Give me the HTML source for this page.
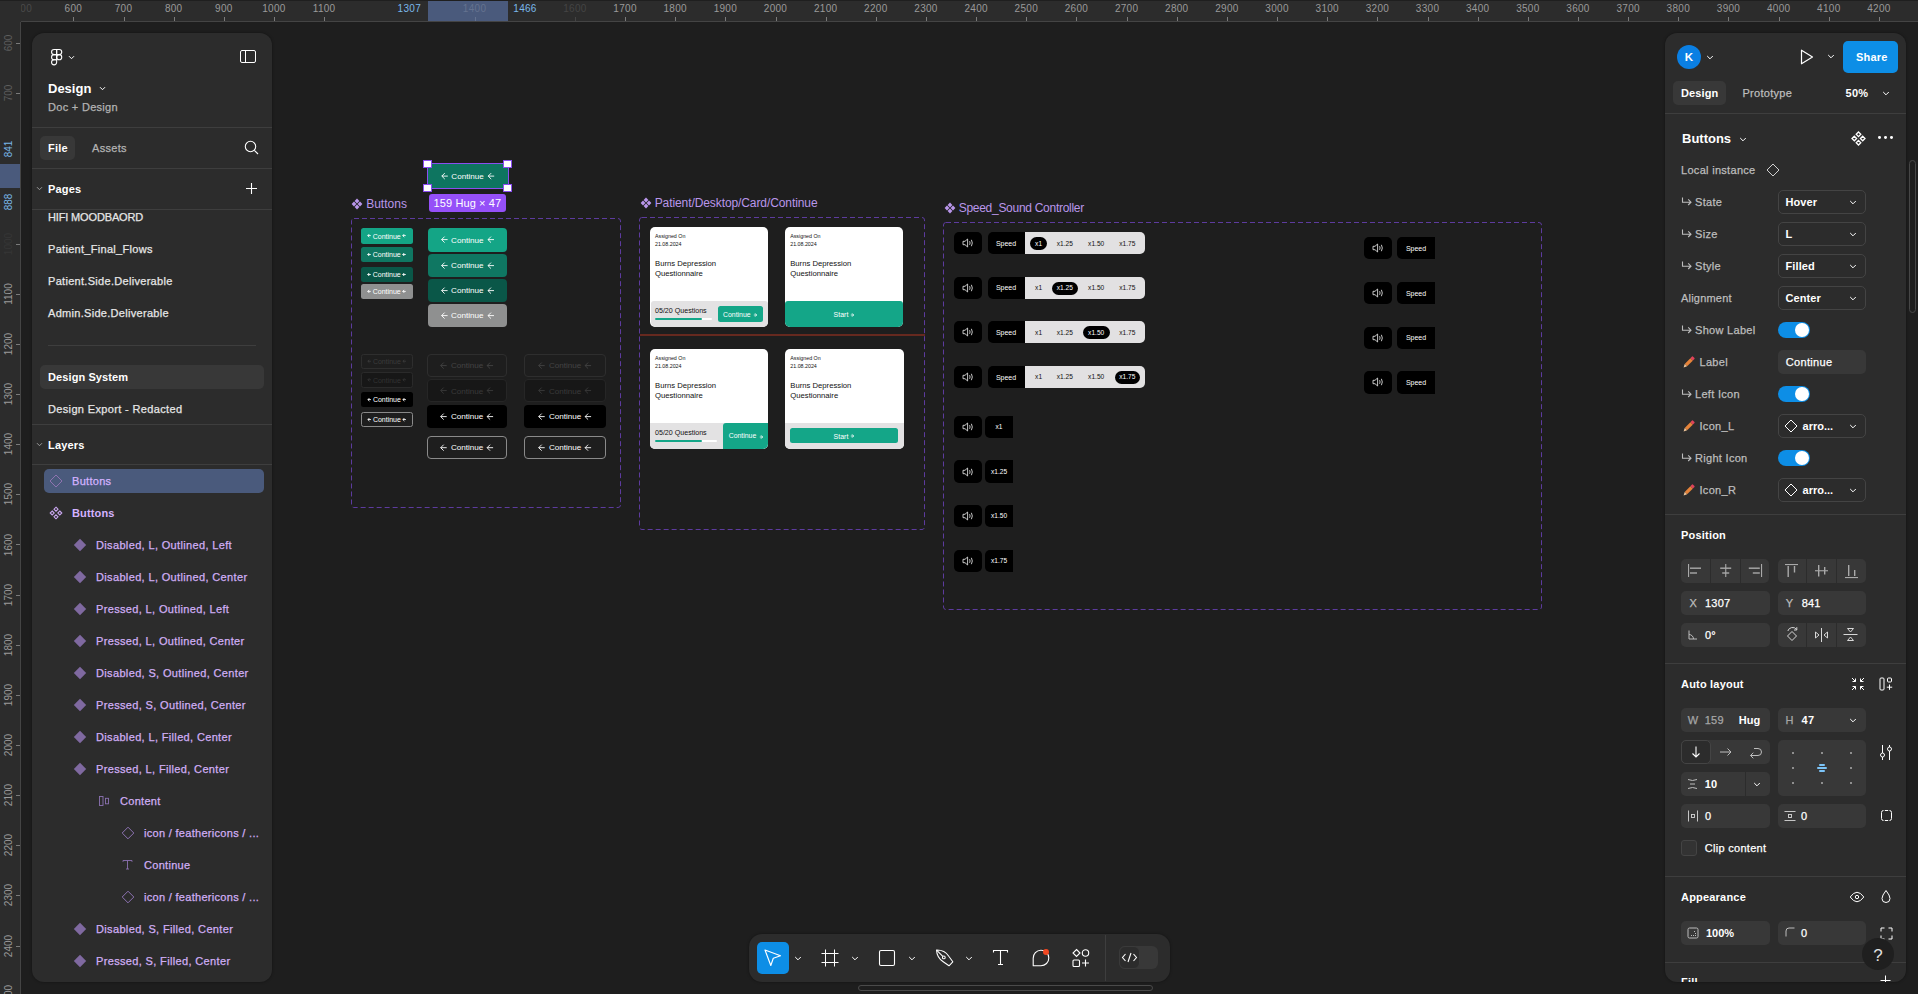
<!DOCTYPE html>
<html><head><meta charset="utf-8"><title>Figma</title>
<style>
html,body{margin:0;padding:0;}
body{width:1918px;height:994px;overflow:hidden;background:#1e1e1e;position:relative;font-family:"Liberation Sans", sans-serif;}
.t{position:absolute;white-space:nowrap;}
.r{position:absolute;box-sizing:border-box;}
</style></head><body>
<svg class="r" style="left:351px;top:197.5px;" width="12" height="12" viewBox="0 0 12 12" fill="none"><g fill="#b996ea"><path d="M6 0.6 L8.4 3 L6 5.4 L3.6 3 Z"/><path d="M6 6.6 L8.4 9 L6 11.4 L3.6 9 Z"/><path d="M3 3.6 L5.4 6 L3 8.4 L0.6 6 Z"/><path d="M9 3.6 L11.4 6 L9 8.4 L6.6 6 Z"/></g></svg>
<div class="t" style="left:366.20px;top:197.94px;font-size:12px;line-height:12px;color:#b996ea;font-weight:400;letter-spacing:0px;">Buttons</div>
<svg class="r" style="left:350px;top:217px;" width="272" height="292" viewBox="0 0 272 292" fill="none"><rect x="1.5" y="1.5" width="269" height="289" rx="2.5" stroke="#5d3b9e" stroke-width="1" stroke-dasharray="5 3"/></svg>
<div class="r" style="left:361px;top:228.4px;width:51.5px;height:15.2px;background:#14a586;border-radius:2.5px;"></div>
<div class="t" style="left:186.75px;width:400px;text-align:center;top:232.59px;font-size:7px;line-height:7px;color:#ffffff;font-weight:400;letter-spacing:0px;">Continue</div>
<svg class="r" style="left:361px;top:228.4px;" width="51.5" height="15.2" viewBox="0 0 51.5 15.2" fill="none"><path d="M9.74 7.60 H6.74 M8.24 6.10 L6.74 7.60 L8.24 9.10" stroke="#ffffff" stroke-width="0.9" fill="none"/><path d="M44.76 7.60 H41.76 M43.26 6.10 L41.76 7.60 L43.26 9.10" stroke="#ffffff" stroke-width="0.9" fill="none"/></svg>
<div class="r" style="left:361px;top:247px;width:51.5px;height:15px;background:#0f7762;border-radius:2.5px;"></div>
<div class="t" style="left:186.75px;width:400px;text-align:center;top:251.09px;font-size:7px;line-height:7px;color:#ffffff;font-weight:400;letter-spacing:0px;">Continue</div>
<svg class="r" style="left:361px;top:247px;" width="51.5" height="15" viewBox="0 0 51.5 15" fill="none"><path d="M9.74 7.50 H6.74 M8.24 6.00 L6.74 7.50 L8.24 9.00" stroke="#ffffff" stroke-width="0.9" fill="none"/><path d="M44.76 7.50 H41.76 M43.26 6.00 L41.76 7.50 L43.26 9.00" stroke="#ffffff" stroke-width="0.9" fill="none"/></svg>
<div class="r" style="left:361px;top:266.8px;width:51.5px;height:15px;background:#0a5748;border-radius:2.5px;"></div>
<div class="t" style="left:186.75px;width:400px;text-align:center;top:270.89px;font-size:7px;line-height:7px;color:#ffffff;font-weight:400;letter-spacing:0px;">Continue</div>
<svg class="r" style="left:361px;top:266.8px;" width="51.5" height="15" viewBox="0 0 51.5 15" fill="none"><path d="M9.74 7.50 H6.74 M8.24 6.00 L6.74 7.50 L8.24 9.00" stroke="#ffffff" stroke-width="0.9" fill="none"/><path d="M44.76 7.50 H41.76 M43.26 6.00 L41.76 7.50 L43.26 9.00" stroke="#ffffff" stroke-width="0.9" fill="none"/></svg>
<div class="r" style="left:361px;top:284.2px;width:51.5px;height:14.8px;background:#8f9090;border-radius:2.5px;"></div>
<div class="t" style="left:186.75px;width:400px;text-align:center;top:288.19px;font-size:7px;line-height:7px;color:#ffffff;font-weight:400;letter-spacing:0px;">Continue</div>
<svg class="r" style="left:361px;top:284.2px;" width="51.5" height="14.8" viewBox="0 0 51.5 14.8" fill="none"><path d="M9.74 7.40 H6.74 M8.24 5.90 L6.74 7.40 L8.24 8.90" stroke="#ffffff" stroke-width="0.9" fill="none"/><path d="M44.76 7.40 H41.76 M43.26 5.90 L41.76 7.40 L43.26 8.90" stroke="#ffffff" stroke-width="0.9" fill="none"/></svg>
<div class="r" style="left:427.5px;top:228.4px;width:79.6px;height:23.2px;background:#14a586;border-radius:4px;"></div>
<div class="t" style="left:267.30px;width:400px;text-align:center;top:236.66px;font-size:8.1px;line-height:8.1px;color:#ffffff;font-weight:400;letter-spacing:0px;">Continue</div>
<svg class="r" style="left:427.5px;top:228.4px;" width="79.6" height="23.2" viewBox="0 0 79.6 23.2" fill="none"><path d="M19.59 11.60 H13.59 M16.59 8.60 L13.59 11.60 L16.59 14.60" stroke="#ffffff" stroke-width="0.9" fill="none"/><path d="M66.01 11.60 H60.01 M63.01 8.60 L60.01 11.60 L63.01 14.60" stroke="#ffffff" stroke-width="0.9" fill="none"/></svg>
<div class="r" style="left:427.5px;top:254px;width:79.6px;height:23.2px;background:#0f7762;border-radius:4px;"></div>
<div class="t" style="left:267.30px;width:400px;text-align:center;top:262.26px;font-size:8.1px;line-height:8.1px;color:#ffffff;font-weight:400;letter-spacing:0px;">Continue</div>
<svg class="r" style="left:427.5px;top:254px;" width="79.6" height="23.2" viewBox="0 0 79.6 23.2" fill="none"><path d="M19.59 11.60 H13.59 M16.59 8.60 L13.59 11.60 L16.59 14.60" stroke="#ffffff" stroke-width="0.9" fill="none"/><path d="M66.01 11.60 H60.01 M63.01 8.60 L60.01 11.60 L63.01 14.60" stroke="#ffffff" stroke-width="0.9" fill="none"/></svg>
<div class="r" style="left:427.5px;top:279px;width:79.6px;height:23.2px;background:#0a5748;border-radius:4px;"></div>
<div class="t" style="left:267.30px;width:400px;text-align:center;top:287.26px;font-size:8.1px;line-height:8.1px;color:#ffffff;font-weight:400;letter-spacing:0px;">Continue</div>
<svg class="r" style="left:427.5px;top:279px;" width="79.6" height="23.2" viewBox="0 0 79.6 23.2" fill="none"><path d="M19.59 11.60 H13.59 M16.59 8.60 L13.59 11.60 L16.59 14.60" stroke="#ffffff" stroke-width="0.9" fill="none"/><path d="M66.01 11.60 H60.01 M63.01 8.60 L60.01 11.60 L63.01 14.60" stroke="#ffffff" stroke-width="0.9" fill="none"/></svg>
<div class="r" style="left:427.5px;top:304px;width:79.6px;height:23.2px;background:#8f9090;border-radius:4px;"></div>
<div class="t" style="left:267.30px;width:400px;text-align:center;top:312.26px;font-size:8.1px;line-height:8.1px;color:#ffffff;font-weight:400;letter-spacing:0px;">Continue</div>
<svg class="r" style="left:427.5px;top:304px;" width="79.6" height="23.2" viewBox="0 0 79.6 23.2" fill="none"><path d="M19.59 11.60 H13.59 M16.59 8.60 L13.59 11.60 L16.59 14.60" stroke="#ffffff" stroke-width="0.9" fill="none"/><path d="M66.01 11.60 H60.01 M63.01 8.60 L60.01 11.60 L63.01 14.60" stroke="#ffffff" stroke-width="0.9" fill="none"/></svg>
<div class="r" style="left:361px;top:354.2px;width:51.8px;height:14.5px;background:#1e1e1e;border-radius:2.5px;border:1px solid #2e2e2e;"></div>
<div class="t" style="left:186.90px;width:400px;text-align:center;top:358.04px;font-size:7px;line-height:7px;color:#3b3b3b;font-weight:400;letter-spacing:0px;">Continue</div>
<svg class="r" style="left:361px;top:354.2px;" width="51.8" height="14.5" viewBox="0 0 51.8 14.5" fill="none"><path d="M9.89 7.25 H6.89 M8.39 5.75 L6.89 7.25 L8.39 8.75" stroke="#3b3b3b" stroke-width="0.9" fill="none"/><path d="M44.91 7.25 H41.91 M43.41 5.75 L41.91 7.25 L43.41 8.75" stroke="#3b3b3b" stroke-width="0.9" fill="none"/></svg>
<div class="r" style="left:361px;top:372.3px;width:51.8px;height:15.5px;background:#171717;border-radius:2.5px;border:1px solid #2a2a2a;"></div>
<div class="t" style="left:186.90px;width:400px;text-align:center;top:376.64px;font-size:7px;line-height:7px;color:#333333;font-weight:400;letter-spacing:0px;">Continue</div>
<svg class="r" style="left:361px;top:372.3px;" width="51.8" height="15.5" viewBox="0 0 51.8 15.5" fill="none"><path d="M9.89 7.75 H6.89 M8.39 6.25 L6.89 7.75 L8.39 9.25" stroke="#333333" stroke-width="0.9" fill="none"/><path d="M44.91 7.75 H41.91 M43.41 6.25 L41.91 7.75 L43.41 9.25" stroke="#333333" stroke-width="0.9" fill="none"/></svg>
<div class="r" style="left:361px;top:391.8px;width:51.8px;height:15.2px;background:#000000;border-radius:2.5px;"></div>
<div class="t" style="left:186.90px;width:400px;text-align:center;top:395.99px;font-size:7px;line-height:7px;color:#ffffff;font-weight:400;letter-spacing:0px;">Continue</div>
<svg class="r" style="left:361px;top:391.8px;" width="51.8" height="15.2" viewBox="0 0 51.8 15.2" fill="none"><path d="M9.89 7.60 H6.89 M8.39 6.10 L6.89 7.60 L8.39 9.10" stroke="#ffffff" stroke-width="0.9" fill="none"/><path d="M44.91 7.60 H41.91 M43.41 6.10 L41.91 7.60 L43.41 9.10" stroke="#ffffff" stroke-width="0.9" fill="none"/></svg>
<div class="r" style="left:361px;top:411.6px;width:51.8px;height:15.1px;background:#1e1e1e;border-radius:2.5px;border:1px solid #8a8a8a;"></div>
<div class="t" style="left:186.90px;width:400px;text-align:center;top:415.74px;font-size:7px;line-height:7px;color:#ffffff;font-weight:400;letter-spacing:0px;">Continue</div>
<svg class="r" style="left:361px;top:411.6px;" width="51.8" height="15.1" viewBox="0 0 51.8 15.1" fill="none"><path d="M9.89 7.55 H6.89 M8.39 6.05 L6.89 7.55 L8.39 9.05" stroke="#ffffff" stroke-width="0.9" fill="none"/><path d="M44.91 7.55 H41.91 M43.41 6.05 L41.91 7.55 L43.41 9.05" stroke="#ffffff" stroke-width="0.9" fill="none"/></svg>
<div class="r" style="left:427.2px;top:354.2px;width:79.8px;height:23.2px;background:#1e1e1e;border-radius:4px;border:1px solid #2e2e2e;"></div>
<div class="t" style="left:267.10px;width:400px;text-align:center;top:362.46px;font-size:8.1px;line-height:8.1px;color:#444444;font-weight:400;letter-spacing:0px;">Continue</div>
<svg class="r" style="left:427.2px;top:354.2px;" width="79.8" height="23.2" viewBox="0 0 79.8 23.2" fill="none"><path d="M19.69 11.60 H13.69 M16.69 8.60 L13.69 11.60 L16.69 14.60" stroke="#444444" stroke-width="0.9" fill="none"/><path d="M66.11 11.60 H60.11 M63.11 8.60 L60.11 11.60 L63.11 14.60" stroke="#444444" stroke-width="0.9" fill="none"/></svg>
<div class="r" style="left:427.2px;top:379.4px;width:79.8px;height:23.1px;background:#171717;border-radius:4px;border:1px solid #262626;"></div>
<div class="t" style="left:267.10px;width:400px;text-align:center;top:387.61px;font-size:8.1px;line-height:8.1px;color:#3a3a3a;font-weight:400;letter-spacing:0px;">Continue</div>
<svg class="r" style="left:427.2px;top:379.4px;" width="79.8" height="23.1" viewBox="0 0 79.8 23.1" fill="none"><path d="M19.69 11.55 H13.69 M16.69 8.55 L13.69 11.55 L16.69 14.55" stroke="#3a3a3a" stroke-width="0.9" fill="none"/><path d="M66.11 11.55 H60.11 M63.11 8.55 L60.11 11.55 L63.11 14.55" stroke="#3a3a3a" stroke-width="0.9" fill="none"/></svg>
<div class="r" style="left:427.2px;top:404.5px;width:79.8px;height:23.2px;background:#000000;border-radius:4px;"></div>
<div class="t" style="left:267.10px;width:400px;text-align:center;top:412.76px;font-size:8.1px;line-height:8.1px;color:#ffffff;font-weight:400;letter-spacing:0px;">Continue</div>
<svg class="r" style="left:427.2px;top:404.5px;" width="79.8" height="23.2" viewBox="0 0 79.8 23.2" fill="none"><path d="M19.69 11.60 H13.69 M16.69 8.60 L13.69 11.60 L16.69 14.60" stroke="#ffffff" stroke-width="0.9" fill="none"/><path d="M66.11 11.60 H60.11 M63.11 8.60 L60.11 11.60 L63.11 14.60" stroke="#ffffff" stroke-width="0.9" fill="none"/></svg>
<div class="r" style="left:427.2px;top:436.1px;width:79.8px;height:23.4px;background:#1e1e1e;border-radius:4px;border:1px solid #8a8a8a;"></div>
<div class="t" style="left:267.10px;width:400px;text-align:center;top:444.46px;font-size:8.1px;line-height:8.1px;color:#ffffff;font-weight:400;letter-spacing:0px;">Continue</div>
<svg class="r" style="left:427.2px;top:436.1px;" width="79.8" height="23.4" viewBox="0 0 79.8 23.4" fill="none"><path d="M19.69 11.70 H13.69 M16.69 8.70 L13.69 11.70 L16.69 14.70" stroke="#ffffff" stroke-width="0.9" fill="none"/><path d="M66.11 11.70 H60.11 M63.11 8.70 L60.11 11.70 L63.11 14.70" stroke="#ffffff" stroke-width="0.9" fill="none"/></svg>
<div class="r" style="left:524.2px;top:354.2px;width:81.8px;height:23.2px;background:#1e1e1e;border-radius:4px;border:1px solid #2e2e2e;"></div>
<div class="t" style="left:365.10px;width:400px;text-align:center;top:362.46px;font-size:8.1px;line-height:8.1px;color:#444444;font-weight:400;letter-spacing:0px;">Continue</div>
<svg class="r" style="left:524.2px;top:354.2px;" width="81.8" height="23.2" viewBox="0 0 81.8 23.2" fill="none"><path d="M20.69 11.60 H14.69 M17.69 8.60 L14.69 11.60 L17.69 14.60" stroke="#444444" stroke-width="0.9" fill="none"/><path d="M67.11 11.60 H61.11 M64.11 8.60 L61.11 11.60 L64.11 14.60" stroke="#444444" stroke-width="0.9" fill="none"/></svg>
<div class="r" style="left:524.2px;top:379.4px;width:81.8px;height:23.1px;background:#171717;border-radius:4px;border:1px solid #262626;"></div>
<div class="t" style="left:365.10px;width:400px;text-align:center;top:387.61px;font-size:8.1px;line-height:8.1px;color:#3a3a3a;font-weight:400;letter-spacing:0px;">Continue</div>
<svg class="r" style="left:524.2px;top:379.4px;" width="81.8" height="23.1" viewBox="0 0 81.8 23.1" fill="none"><path d="M20.69 11.55 H14.69 M17.69 8.55 L14.69 11.55 L17.69 14.55" stroke="#3a3a3a" stroke-width="0.9" fill="none"/><path d="M67.11 11.55 H61.11 M64.11 8.55 L61.11 11.55 L64.11 14.55" stroke="#3a3a3a" stroke-width="0.9" fill="none"/></svg>
<div class="r" style="left:524.2px;top:404.5px;width:81.8px;height:23.2px;background:#000000;border-radius:4px;"></div>
<div class="t" style="left:365.10px;width:400px;text-align:center;top:412.76px;font-size:8.1px;line-height:8.1px;color:#ffffff;font-weight:400;letter-spacing:0px;">Continue</div>
<svg class="r" style="left:524.2px;top:404.5px;" width="81.8" height="23.2" viewBox="0 0 81.8 23.2" fill="none"><path d="M20.69 11.60 H14.69 M17.69 8.60 L14.69 11.60 L17.69 14.60" stroke="#ffffff" stroke-width="0.9" fill="none"/><path d="M67.11 11.60 H61.11 M64.11 8.60 L61.11 11.60 L64.11 14.60" stroke="#ffffff" stroke-width="0.9" fill="none"/></svg>
<div class="r" style="left:524.2px;top:436.1px;width:81.8px;height:23.4px;background:#1e1e1e;border-radius:4px;border:1px solid #8a8a8a;"></div>
<div class="t" style="left:365.10px;width:400px;text-align:center;top:444.46px;font-size:8.1px;line-height:8.1px;color:#ffffff;font-weight:400;letter-spacing:0px;">Continue</div>
<svg class="r" style="left:524.2px;top:436.1px;" width="81.8" height="23.4" viewBox="0 0 81.8 23.4" fill="none"><path d="M20.69 11.70 H14.69 M17.69 8.70 L14.69 11.70 L17.69 14.70" stroke="#ffffff" stroke-width="0.9" fill="none"/><path d="M67.11 11.70 H61.11 M64.11 8.70 L61.11 11.70 L64.11 14.70" stroke="#ffffff" stroke-width="0.9" fill="none"/></svg>
<div class="r" style="left:427.5px;top:163.9px;width:80px;height:24.2px;background:#0e7560;border-radius:0px;"></div>
<div class="t" style="left:267.50px;width:400px;text-align:center;top:172.66px;font-size:8.1px;line-height:8.1px;color:#ffffff;font-weight:400;letter-spacing:0px;">Continue</div>
<svg class="r" style="left:427.5px;top:163.9px;" width="80" height="24.2" viewBox="0 0 80 24.2" fill="none"><path d="M19.79 12.10 H13.79 M16.79 9.10 L13.79 12.10 L16.79 15.10" stroke="#ffffff" stroke-width="0.9" fill="none"/><path d="M66.21 12.10 H60.21 M63.21 9.10 L60.21 12.10 L63.21 15.10" stroke="#ffffff" stroke-width="0.9" fill="none"/></svg>
<div class="r" style="left:426.6px;top:163px;width:82px;height:26px;background:transparent;border:1.8px solid #8a4ef0;"></div>
<div class="r" style="left:423.3px;top:159.70000000000002px;width:8.4px;height:8.4px;background:#ffffff;border:1.4px solid #8a4ef0;"></div>
<div class="r" style="left:503.40000000000003px;top:159.70000000000002px;width:8.4px;height:8.4px;background:#ffffff;border:1.4px solid #8a4ef0;"></div>
<div class="r" style="left:423.3px;top:183.9px;width:8.4px;height:8.4px;background:#ffffff;border:1.4px solid #8a4ef0;"></div>
<div class="r" style="left:503.40000000000003px;top:183.9px;width:8.4px;height:8.4px;background:#ffffff;border:1.4px solid #8a4ef0;"></div>
<div class="r" style="left:429.4px;top:194.4px;width:76.3px;height:17.4px;background:#9550f8;border-radius:3px;"></div>
<div class="t" style="left:267.40px;width:400px;text-align:center;top:197.99px;font-size:11px;line-height:11px;color:#ffffff;font-weight:400;letter-spacing:0.1px;">159 Hug × 47</div>
<svg class="r" style="left:639.8px;top:196.5px;" width="12" height="12" viewBox="0 0 12 12" fill="none"><g fill="#b996ea"><path d="M6 0.6 L8.4 3 L6 5.4 L3.6 3 Z"/><path d="M6 6.6 L8.4 9 L6 11.4 L3.6 9 Z"/><path d="M3 3.6 L5.4 6 L3 8.4 L0.6 6 Z"/><path d="M9 3.6 L11.4 6 L9 8.4 L6.6 6 Z"/></g></svg>
<div class="t" style="left:654.70px;top:197.04px;font-size:12px;line-height:12px;color:#b996ea;font-weight:400;letter-spacing:-0.09px;">Patient/Desktop/Card/Continue</div>
<svg class="r" style="left:638px;top:216px;" width="288" height="315" viewBox="0 0 288 315" fill="none"><rect x="1.5" y="1.5" width="285" height="312" rx="2.5" stroke="#5d3b9e" stroke-width="1" stroke-dasharray="5 3"/></svg>
<div class="r" style="left:640px;top:334px;width:284.5px;height:1.5px;background:#66291f;"></div>
<div class="r" style="left:650px;top:227px;width:118px;height:100.2px;background:#ffffff;border-radius:5px;"></div>
<div class="t" style="left:655.00px;top:233.51px;font-size:5.3px;line-height:5.3px;color:#111;font-weight:400;letter-spacing:0px;">Assigned On</div>
<div class="t" style="left:655.00px;top:241.81px;font-size:5.3px;line-height:5.3px;color:#111;font-weight:400;letter-spacing:0px;">21.08.2024</div>
<div class="t" style="left:655.00px;top:259.78px;font-size:7.7px;line-height:7.7px;color:#111;font-weight:400;letter-spacing:0px;">Burns Depression</div>
<div class="t" style="left:655.00px;top:269.68px;font-size:7.7px;line-height:7.7px;color:#111;font-weight:400;letter-spacing:0px;">Questionnaire</div>
<div class="r" style="left:650.5px;top:300.8px;width:117px;height:26.3px;background:#e3e2e3;border-radius:3px 3px 5px 5px;"></div>
<div class="t" style="left:655.00px;top:308.19px;font-size:7.1px;line-height:7.1px;color:#111;font-weight:400;letter-spacing:0px;">05/20 Questions</div>
<div class="r" style="left:655px;top:318px;width:57px;height:2px;background:#ffffff;border-radius:1px;"></div>
<div class="r" style="left:655px;top:318px;width:47px;height:2px;background:#14a688;border-radius:1px;"></div>
<div class="r" style="left:718px;top:306.3px;width:45px;height:15.3px;background:#14a688;border-radius:2.5px;"></div>
<div class="t" style="left:536.80px;width:400px;text-align:center;top:311.56px;font-size:6.9px;line-height:6.9px;color:#fff;font-weight:400;letter-spacing:0px;">Continue</div>
<svg class="r" style="left:752.5px;top:310.8px;" width="6" height="8" viewBox="0 0 6 8" fill="none"><path d="M2 2.3 L3.7 4 L2 5.7 M0.8 4 H3.6" stroke="#fff" stroke-width="0.8" fill="none"/></svg>
<div class="r" style="left:785.2px;top:227px;width:118.2px;height:100.2px;background:#ffffff;border-radius:5px;"></div>
<div class="t" style="left:790.20px;top:233.51px;font-size:5.3px;line-height:5.3px;color:#111;font-weight:400;letter-spacing:0px;">Assigned On</div>
<div class="t" style="left:790.20px;top:241.81px;font-size:5.3px;line-height:5.3px;color:#111;font-weight:400;letter-spacing:0px;">21.08.2024</div>
<div class="t" style="left:790.20px;top:259.78px;font-size:7.7px;line-height:7.7px;color:#111;font-weight:400;letter-spacing:0px;">Burns Depression</div>
<div class="t" style="left:790.20px;top:269.68px;font-size:7.7px;line-height:7.7px;color:#111;font-weight:400;letter-spacing:0px;">Questionnaire</div>
<div class="r" style="left:785.2px;top:300.8px;width:118.2px;height:26.4px;background:#14a688;border-radius:3px 3px 5px 5px;"></div>
<div class="t" style="left:641.00px;width:400px;text-align:center;top:311.07px;font-size:7px;line-height:7px;color:#fff;font-weight:400;letter-spacing:0px;">Start</div>
<svg class="r" style="left:850px;top:310.5px;" width="6" height="8" viewBox="0 0 6 8" fill="none"><path d="M2 2.3 L3.7 4 L2 5.7 M0.8 4 H3.6" stroke="#fff" stroke-width="0.8" fill="none"/></svg>
<div class="r" style="left:650px;top:349px;width:118.4px;height:100px;background:#ffffff;border-radius:5px;"></div>
<div class="t" style="left:655.00px;top:355.51px;font-size:5.3px;line-height:5.3px;color:#111;font-weight:400;letter-spacing:0px;">Assigned On</div>
<div class="t" style="left:655.00px;top:363.81px;font-size:5.3px;line-height:5.3px;color:#111;font-weight:400;letter-spacing:0px;">21.08.2024</div>
<div class="t" style="left:655.00px;top:381.78px;font-size:7.7px;line-height:7.7px;color:#111;font-weight:400;letter-spacing:0px;">Burns Depression</div>
<div class="t" style="left:655.00px;top:391.68px;font-size:7.7px;line-height:7.7px;color:#111;font-weight:400;letter-spacing:0px;">Questionnaire</div>
<div class="r" style="left:650px;top:422.5px;width:118.4px;height:26.5px;background:#e3e2e3;border-radius:0 0 5px 5px;"></div>
<div class="r" style="left:723px;top:422.5px;width:45.4px;height:26.5px;background:#14a688;border-radius:3px 0 5px 0;"></div>
<div class="t" style="left:655.00px;top:430.19px;font-size:7.1px;line-height:7.1px;color:#111;font-weight:400;letter-spacing:0px;">05/20 Questions</div>
<div class="r" style="left:655px;top:440px;width:62px;height:2px;background:#ffffff;border-radius:1px;"></div>
<div class="r" style="left:655px;top:440px;width:47px;height:2px;background:#14a688;border-radius:1px;"></div>
<div class="t" style="left:542.50px;width:400px;text-align:center;top:432.96px;font-size:6.9px;line-height:6.9px;color:#fff;font-weight:400;letter-spacing:0px;">Continue</div>
<svg class="r" style="left:758.5px;top:432.5px;" width="6" height="8" viewBox="0 0 6 8" fill="none"><path d="M2 2.3 L3.7 4 L2 5.7 M0.8 4 H3.6" stroke="#fff" stroke-width="0.8" fill="none"/></svg>
<div class="r" style="left:785.3px;top:349px;width:118.3px;height:100px;background:#ffffff;border-radius:5px;"></div>
<div class="t" style="left:790.30px;top:355.51px;font-size:5.3px;line-height:5.3px;color:#111;font-weight:400;letter-spacing:0px;">Assigned On</div>
<div class="t" style="left:790.30px;top:363.81px;font-size:5.3px;line-height:5.3px;color:#111;font-weight:400;letter-spacing:0px;">21.08.2024</div>
<div class="t" style="left:790.30px;top:381.78px;font-size:7.7px;line-height:7.7px;color:#111;font-weight:400;letter-spacing:0px;">Burns Depression</div>
<div class="t" style="left:790.30px;top:391.68px;font-size:7.7px;line-height:7.7px;color:#111;font-weight:400;letter-spacing:0px;">Questionnaire</div>
<div class="r" style="left:785.3px;top:422.5px;width:118.3px;height:26.5px;background:#e3e2e3;border-radius:0 0 5px 5px;"></div>
<div class="r" style="left:790px;top:428.2px;width:108.3px;height:15.3px;background:#14a688;border-radius:2.5px;"></div>
<div class="t" style="left:641.00px;width:400px;text-align:center;top:432.57px;font-size:7px;line-height:7px;color:#fff;font-weight:400;letter-spacing:0px;">Start</div>
<svg class="r" style="left:850px;top:432px;" width="6" height="8" viewBox="0 0 6 8" fill="none"><path d="M2 2.3 L3.7 4 L2 5.7 M0.8 4 H3.6" stroke="#fff" stroke-width="0.8" fill="none"/></svg>
<svg class="r" style="left:943.8px;top:201.5px;" width="12" height="12" viewBox="0 0 12 12" fill="none"><g fill="#b996ea"><path d="M6 0.6 L8.4 3 L6 5.4 L3.6 3 Z"/><path d="M6 6.6 L8.4 9 L6 11.4 L3.6 9 Z"/><path d="M3 3.6 L5.4 6 L3 8.4 L0.6 6 Z"/><path d="M9 3.6 L11.4 6 L9 8.4 L6.6 6 Z"/></g></svg>
<div class="t" style="left:958.70px;top:201.94px;font-size:12px;line-height:12px;color:#b996ea;font-weight:400;letter-spacing:-0.28px;">Speed_Sound Controller</div>
<svg class="r" style="left:942px;top:221px;" width="601" height="390" viewBox="0 0 601 390" fill="none"><rect x="1.5" y="1.5" width="598" height="387" rx="2.5" stroke="#5d3b9e" stroke-width="1" stroke-dasharray="5 3"/></svg>
<div class="r" style="left:954px;top:232.2px;width:28px;height:22px;background:#000000;border-radius:5px;"></div>
<svg class="r" style="left:962.0px;top:238.2px;" width="12" height="10" viewBox="0 0 12 10" fill="none"><g stroke="#e6e6e6" stroke-width="0.85" fill="none" stroke-linejoin="round"><path d="M1 3.3 H3 L5.6 1 V9 L3 6.7 H1 Z"/><path d="M7.6 3.2 Q8.6 5 7.6 6.8"/><path d="M9.4 1.8 Q11.2 5 9.4 8.2"/></g></svg>
<div class="r" style="left:987.5px;top:232.2px;width:38px;height:22px;background:#000000;border-radius:5px 0 0 5px;"></div>
<div class="t" style="left:806.00px;width:400px;text-align:center;top:239.77px;font-size:7px;line-height:7px;color:#ffffff;font-weight:400;letter-spacing:0px;">Speed</div>
<div class="r" style="left:1025.1px;top:232.2px;width:120.4px;height:22px;background:#e2e1e2;border-radius:0 5px 5px 0;"></div>
<div class="r" style="left:1030.3px;top:236.89999999999998px;width:16.700000000000045px;height:13px;background:#000000;border-radius:7px;"></div>
<div class="t" style="left:838.60px;width:400px;text-align:center;top:240.51px;font-size:6.6px;line-height:6.6px;color:#ffffff;font-weight:400;letter-spacing:0px;">x1</div>
<div class="t" style="left:864.90px;width:400px;text-align:center;top:240.51px;font-size:6.6px;line-height:6.6px;color:#111111;font-weight:400;letter-spacing:0px;">x1.25</div>
<div class="t" style="left:896.20px;width:400px;text-align:center;top:240.51px;font-size:6.6px;line-height:6.6px;color:#111111;font-weight:400;letter-spacing:0px;">x1.50</div>
<div class="t" style="left:927.40px;width:400px;text-align:center;top:240.51px;font-size:6.6px;line-height:6.6px;color:#111111;font-weight:400;letter-spacing:0px;">x1.75</div>
<div class="r" style="left:954px;top:276.8px;width:28px;height:22px;background:#000000;border-radius:5px;"></div>
<svg class="r" style="left:962.0px;top:282.8px;" width="12" height="10" viewBox="0 0 12 10" fill="none"><g stroke="#e6e6e6" stroke-width="0.85" fill="none" stroke-linejoin="round"><path d="M1 3.3 H3 L5.6 1 V9 L3 6.7 H1 Z"/><path d="M7.6 3.2 Q8.6 5 7.6 6.8"/><path d="M9.4 1.8 Q11.2 5 9.4 8.2"/></g></svg>
<div class="r" style="left:987.5px;top:276.8px;width:38px;height:22px;background:#000000;border-radius:5px 0 0 5px;"></div>
<div class="t" style="left:806.00px;width:400px;text-align:center;top:284.37px;font-size:7px;line-height:7px;color:#ffffff;font-weight:400;letter-spacing:0px;">Speed</div>
<div class="r" style="left:1025.1px;top:276.8px;width:120.4px;height:22px;background:#e2e1e2;border-radius:0 5px 5px 0;"></div>
<div class="r" style="left:1052.1px;top:281.5px;width:25.800000000000182px;height:13px;background:#000000;border-radius:7px;"></div>
<div class="t" style="left:838.60px;width:400px;text-align:center;top:285.11px;font-size:6.6px;line-height:6.6px;color:#111111;font-weight:400;letter-spacing:0px;">x1</div>
<div class="t" style="left:864.90px;width:400px;text-align:center;top:285.11px;font-size:6.6px;line-height:6.6px;color:#ffffff;font-weight:400;letter-spacing:0px;">x1.25</div>
<div class="t" style="left:896.20px;width:400px;text-align:center;top:285.11px;font-size:6.6px;line-height:6.6px;color:#111111;font-weight:400;letter-spacing:0px;">x1.50</div>
<div class="t" style="left:927.40px;width:400px;text-align:center;top:285.11px;font-size:6.6px;line-height:6.6px;color:#111111;font-weight:400;letter-spacing:0px;">x1.75</div>
<div class="r" style="left:954px;top:321.4px;width:28px;height:22px;background:#000000;border-radius:5px;"></div>
<svg class="r" style="left:962.0px;top:327.4px;" width="12" height="10" viewBox="0 0 12 10" fill="none"><g stroke="#e6e6e6" stroke-width="0.85" fill="none" stroke-linejoin="round"><path d="M1 3.3 H3 L5.6 1 V9 L3 6.7 H1 Z"/><path d="M7.6 3.2 Q8.6 5 7.6 6.8"/><path d="M9.4 1.8 Q11.2 5 9.4 8.2"/></g></svg>
<div class="r" style="left:987.5px;top:321.4px;width:38px;height:22px;background:#000000;border-radius:5px 0 0 5px;"></div>
<div class="t" style="left:806.00px;width:400px;text-align:center;top:328.97px;font-size:7px;line-height:7px;color:#ffffff;font-weight:400;letter-spacing:0px;">Speed</div>
<div class="r" style="left:1025.1px;top:321.4px;width:120.4px;height:22px;background:#e2e1e2;border-radius:0 5px 5px 0;"></div>
<div class="r" style="left:1082.9px;top:326.09999999999997px;width:26.699999999999818px;height:13px;background:#000000;border-radius:7px;"></div>
<div class="t" style="left:838.60px;width:400px;text-align:center;top:329.71px;font-size:6.6px;line-height:6.6px;color:#111111;font-weight:400;letter-spacing:0px;">x1</div>
<div class="t" style="left:864.90px;width:400px;text-align:center;top:329.71px;font-size:6.6px;line-height:6.6px;color:#111111;font-weight:400;letter-spacing:0px;">x1.25</div>
<div class="t" style="left:896.20px;width:400px;text-align:center;top:329.71px;font-size:6.6px;line-height:6.6px;color:#ffffff;font-weight:400;letter-spacing:0px;">x1.50</div>
<div class="t" style="left:927.40px;width:400px;text-align:center;top:329.71px;font-size:6.6px;line-height:6.6px;color:#111111;font-weight:400;letter-spacing:0px;">x1.75</div>
<div class="r" style="left:954px;top:366.0px;width:28px;height:22px;background:#000000;border-radius:5px;"></div>
<svg class="r" style="left:962.0px;top:372.0px;" width="12" height="10" viewBox="0 0 12 10" fill="none"><g stroke="#e6e6e6" stroke-width="0.85" fill="none" stroke-linejoin="round"><path d="M1 3.3 H3 L5.6 1 V9 L3 6.7 H1 Z"/><path d="M7.6 3.2 Q8.6 5 7.6 6.8"/><path d="M9.4 1.8 Q11.2 5 9.4 8.2"/></g></svg>
<div class="r" style="left:987.5px;top:366.0px;width:38px;height:22px;background:#000000;border-radius:5px 0 0 5px;"></div>
<div class="t" style="left:806.00px;width:400px;text-align:center;top:373.57px;font-size:7px;line-height:7px;color:#ffffff;font-weight:400;letter-spacing:0px;">Speed</div>
<div class="r" style="left:1025.1px;top:366.0px;width:120.4px;height:22px;background:#e2e1e2;border-radius:0 5px 5px 0;"></div>
<div class="r" style="left:1114.7px;top:370.7px;width:25.09999999999991px;height:13px;background:#000000;border-radius:7px;"></div>
<div class="t" style="left:838.60px;width:400px;text-align:center;top:374.31px;font-size:6.6px;line-height:6.6px;color:#111111;font-weight:400;letter-spacing:0px;">x1</div>
<div class="t" style="left:864.90px;width:400px;text-align:center;top:374.31px;font-size:6.6px;line-height:6.6px;color:#111111;font-weight:400;letter-spacing:0px;">x1.25</div>
<div class="t" style="left:896.20px;width:400px;text-align:center;top:374.31px;font-size:6.6px;line-height:6.6px;color:#111111;font-weight:400;letter-spacing:0px;">x1.50</div>
<div class="t" style="left:927.40px;width:400px;text-align:center;top:374.31px;font-size:6.6px;line-height:6.6px;color:#ffffff;font-weight:400;letter-spacing:0px;">x1.75</div>
<div class="r" style="left:953.8px;top:415.8px;width:28.3px;height:22.2px;background:#000000;border-radius:5px;"></div>
<svg class="r" style="left:961.9499999999999px;top:421.90000000000003px;" width="12" height="10" viewBox="0 0 12 10" fill="none"><g stroke="#e6e6e6" stroke-width="0.85" fill="none" stroke-linejoin="round"><path d="M1 3.3 H3 L5.6 1 V9 L3 6.7 H1 Z"/><path d="M7.6 3.2 Q8.6 5 7.6 6.8"/><path d="M9.4 1.8 Q11.2 5 9.4 8.2"/></g></svg>
<div class="r" style="left:984.8px;top:415.8px;width:28.3px;height:22.2px;background:#000000;border-radius:5px 0 0 5px;"></div>
<div class="t" style="left:799.00px;width:400px;text-align:center;top:424.11px;font-size:6.6px;line-height:6.6px;color:#ffffff;font-weight:400;letter-spacing:0px;">x1</div>
<div class="r" style="left:953.8px;top:460.40000000000003px;width:28.3px;height:22.2px;background:#000000;border-radius:5px;"></div>
<svg class="r" style="left:961.9499999999999px;top:466.50000000000006px;" width="12" height="10" viewBox="0 0 12 10" fill="none"><g stroke="#e6e6e6" stroke-width="0.85" fill="none" stroke-linejoin="round"><path d="M1 3.3 H3 L5.6 1 V9 L3 6.7 H1 Z"/><path d="M7.6 3.2 Q8.6 5 7.6 6.8"/><path d="M9.4 1.8 Q11.2 5 9.4 8.2"/></g></svg>
<div class="r" style="left:984.8px;top:460.40000000000003px;width:28.3px;height:22.2px;background:#000000;border-radius:5px 0 0 5px;"></div>
<div class="t" style="left:799.00px;width:400px;text-align:center;top:468.71px;font-size:6.6px;line-height:6.6px;color:#ffffff;font-weight:400;letter-spacing:0px;">x1.25</div>
<div class="r" style="left:953.8px;top:505.0px;width:28.3px;height:22.2px;background:#000000;border-radius:5px;"></div>
<svg class="r" style="left:961.9499999999999px;top:511.1px;" width="12" height="10" viewBox="0 0 12 10" fill="none"><g stroke="#e6e6e6" stroke-width="0.85" fill="none" stroke-linejoin="round"><path d="M1 3.3 H3 L5.6 1 V9 L3 6.7 H1 Z"/><path d="M7.6 3.2 Q8.6 5 7.6 6.8"/><path d="M9.4 1.8 Q11.2 5 9.4 8.2"/></g></svg>
<div class="r" style="left:984.8px;top:505.0px;width:28.3px;height:22.2px;background:#000000;border-radius:5px 0 0 5px;"></div>
<div class="t" style="left:799.00px;width:400px;text-align:center;top:513.31px;font-size:6.6px;line-height:6.6px;color:#ffffff;font-weight:400;letter-spacing:0px;">x1.50</div>
<div class="r" style="left:953.8px;top:549.6px;width:28.3px;height:22.2px;background:#000000;border-radius:5px;"></div>
<svg class="r" style="left:961.9499999999999px;top:555.7px;" width="12" height="10" viewBox="0 0 12 10" fill="none"><g stroke="#e6e6e6" stroke-width="0.85" fill="none" stroke-linejoin="round"><path d="M1 3.3 H3 L5.6 1 V9 L3 6.7 H1 Z"/><path d="M7.6 3.2 Q8.6 5 7.6 6.8"/><path d="M9.4 1.8 Q11.2 5 9.4 8.2"/></g></svg>
<div class="r" style="left:984.8px;top:549.6px;width:28.3px;height:22.2px;background:#000000;border-radius:5px 0 0 5px;"></div>
<div class="t" style="left:799.00px;width:400px;text-align:center;top:557.91px;font-size:6.6px;line-height:6.6px;color:#ffffff;font-weight:400;letter-spacing:0px;">x1.75</div>
<div class="r" style="left:1363.9px;top:237.2px;width:28.5px;height:22.3px;background:#000000;border-radius:5px;"></div>
<svg class="r" style="left:1372.15px;top:243.35px;" width="12" height="10" viewBox="0 0 12 10" fill="none"><g stroke="#e6e6e6" stroke-width="0.85" fill="none" stroke-linejoin="round"><path d="M1 3.3 H3 L5.6 1 V9 L3 6.7 H1 Z"/><path d="M7.6 3.2 Q8.6 5 7.6 6.8"/><path d="M9.4 1.8 Q11.2 5 9.4 8.2"/></g></svg>
<div class="r" style="left:1397.4px;top:237.2px;width:37.5px;height:22.3px;background:#000000;border-radius:5px 0 0 5px;"></div>
<div class="t" style="left:1216.00px;width:400px;text-align:center;top:244.87px;font-size:7px;line-height:7px;color:#ffffff;font-weight:400;letter-spacing:0px;">Speed</div>
<div class="r" style="left:1363.9px;top:281.9px;width:28.5px;height:22.3px;background:#000000;border-radius:5px;"></div>
<svg class="r" style="left:1372.15px;top:288.04999999999995px;" width="12" height="10" viewBox="0 0 12 10" fill="none"><g stroke="#e6e6e6" stroke-width="0.85" fill="none" stroke-linejoin="round"><path d="M1 3.3 H3 L5.6 1 V9 L3 6.7 H1 Z"/><path d="M7.6 3.2 Q8.6 5 7.6 6.8"/><path d="M9.4 1.8 Q11.2 5 9.4 8.2"/></g></svg>
<div class="r" style="left:1397.4px;top:281.9px;width:37.5px;height:22.3px;background:#000000;border-radius:5px 0 0 5px;"></div>
<div class="t" style="left:1216.00px;width:400px;text-align:center;top:289.57px;font-size:7px;line-height:7px;color:#ffffff;font-weight:400;letter-spacing:0px;">Speed</div>
<div class="r" style="left:1363.9px;top:326.6px;width:28.5px;height:22.3px;background:#000000;border-radius:5px;"></div>
<svg class="r" style="left:1372.15px;top:332.75px;" width="12" height="10" viewBox="0 0 12 10" fill="none"><g stroke="#e6e6e6" stroke-width="0.85" fill="none" stroke-linejoin="round"><path d="M1 3.3 H3 L5.6 1 V9 L3 6.7 H1 Z"/><path d="M7.6 3.2 Q8.6 5 7.6 6.8"/><path d="M9.4 1.8 Q11.2 5 9.4 8.2"/></g></svg>
<div class="r" style="left:1397.4px;top:326.6px;width:37.5px;height:22.3px;background:#000000;border-radius:5px 0 0 5px;"></div>
<div class="t" style="left:1216.00px;width:400px;text-align:center;top:334.27px;font-size:7px;line-height:7px;color:#ffffff;font-weight:400;letter-spacing:0px;">Speed</div>
<div class="r" style="left:1363.9px;top:371.3px;width:28.5px;height:22.3px;background:#000000;border-radius:5px;"></div>
<svg class="r" style="left:1372.15px;top:377.45px;" width="12" height="10" viewBox="0 0 12 10" fill="none"><g stroke="#e6e6e6" stroke-width="0.85" fill="none" stroke-linejoin="round"><path d="M1 3.3 H3 L5.6 1 V9 L3 6.7 H1 Z"/><path d="M7.6 3.2 Q8.6 5 7.6 6.8"/><path d="M9.4 1.8 Q11.2 5 9.4 8.2"/></g></svg>
<div class="r" style="left:1397.4px;top:371.3px;width:37.5px;height:22.3px;background:#000000;border-radius:5px 0 0 5px;"></div>
<div class="t" style="left:1216.00px;width:400px;text-align:center;top:378.97px;font-size:7px;line-height:7px;color:#ffffff;font-weight:400;letter-spacing:0px;">Speed</div>
<div class="r" style="left:0px;top:0px;width:1918px;height:21px;background:#2c2c2c;"></div>
<div class="r" style="left:0px;top:21px;width:1918px;height:1px;background:#444444;"></div>
<div class="r" style="left:0px;top:0px;width:20px;height:994px;background:#2c2c2c;"></div>
<div class="r" style="left:20px;top:0px;width:1px;height:994px;background:#444444;"></div>
<div class="r" style="left:428px;top:0px;width:80px;height:21px;background:#4a5a7c;"></div>
<div class="r" style="left:0px;top:164px;width:20px;height:24px;background:#4a5a7c;"></div>
<div class="t" style="left:-176.81px;width:400px;text-align:center;top:3.54px;font-size:10px;line-height:10px;color:#4a4a4a;font-weight:400;letter-spacing:0.3px;">500</div>
<div class="t" style="left:-126.65px;width:400px;text-align:center;top:3.54px;font-size:10px;line-height:10px;color:#9a9a9a;font-weight:400;letter-spacing:0.3px;">600</div>
<div class="r" style="left:73px;top:17px;width:1px;height:4px;background:#7a7a7a;"></div>
<div class="t" style="left:-76.49px;width:400px;text-align:center;top:3.54px;font-size:10px;line-height:10px;color:#9a9a9a;font-weight:400;letter-spacing:0.3px;">700</div>
<div class="r" style="left:124px;top:17px;width:1px;height:4px;background:#7a7a7a;"></div>
<div class="t" style="left:-26.34px;width:400px;text-align:center;top:3.54px;font-size:10px;line-height:10px;color:#9a9a9a;font-weight:400;letter-spacing:0.3px;">800</div>
<div class="r" style="left:174px;top:17px;width:1px;height:4px;background:#7a7a7a;"></div>
<div class="t" style="left:23.82px;width:400px;text-align:center;top:3.54px;font-size:10px;line-height:10px;color:#9a9a9a;font-weight:400;letter-spacing:0.3px;">900</div>
<div class="r" style="left:224px;top:17px;width:1px;height:4px;background:#7a7a7a;"></div>
<div class="t" style="left:73.97px;width:400px;text-align:center;top:3.54px;font-size:10px;line-height:10px;color:#9a9a9a;font-weight:400;letter-spacing:0.3px;">1000</div>
<div class="r" style="left:274px;top:17px;width:1px;height:4px;background:#7a7a7a;"></div>
<div class="t" style="left:124.13px;width:400px;text-align:center;top:3.54px;font-size:10px;line-height:10px;color:#9a9a9a;font-weight:400;letter-spacing:0.3px;">1100</div>
<div class="r" style="left:324px;top:17px;width:1px;height:4px;background:#7a7a7a;"></div>
<div class="t" style="left:274.60px;width:400px;text-align:center;top:3.54px;font-size:10px;line-height:10px;color:#64728f;font-weight:400;letter-spacing:0.3px;">1400</div>
<div class="r" style="left:475px;top:17px;width:1px;height:4px;background:#64728f;"></div>
<div class="t" style="left:374.91px;width:400px;text-align:center;top:3.54px;font-size:10px;line-height:10px;color:#444444;font-weight:400;letter-spacing:0.3px;">1600</div>
<div class="r" style="left:575px;top:17px;width:1px;height:4px;background:#444444;"></div>
<div class="t" style="left:425.07px;width:400px;text-align:center;top:3.54px;font-size:10px;line-height:10px;color:#9a9a9a;font-weight:400;letter-spacing:0.3px;">1700</div>
<div class="r" style="left:625px;top:17px;width:1px;height:4px;background:#7a7a7a;"></div>
<div class="t" style="left:475.22px;width:400px;text-align:center;top:3.54px;font-size:10px;line-height:10px;color:#9a9a9a;font-weight:400;letter-spacing:0.3px;">1800</div>
<div class="r" style="left:675px;top:17px;width:1px;height:4px;background:#7a7a7a;"></div>
<div class="t" style="left:525.38px;width:400px;text-align:center;top:3.54px;font-size:10px;line-height:10px;color:#9a9a9a;font-weight:400;letter-spacing:0.3px;">1900</div>
<div class="r" style="left:725px;top:17px;width:1px;height:4px;background:#7a7a7a;"></div>
<div class="t" style="left:575.53px;width:400px;text-align:center;top:3.54px;font-size:10px;line-height:10px;color:#9a9a9a;font-weight:400;letter-spacing:0.3px;">2000</div>
<div class="r" style="left:776px;top:17px;width:1px;height:4px;background:#7a7a7a;"></div>
<div class="t" style="left:625.69px;width:400px;text-align:center;top:3.54px;font-size:10px;line-height:10px;color:#9a9a9a;font-weight:400;letter-spacing:0.3px;">2100</div>
<div class="r" style="left:826px;top:17px;width:1px;height:4px;background:#7a7a7a;"></div>
<div class="t" style="left:675.85px;width:400px;text-align:center;top:3.54px;font-size:10px;line-height:10px;color:#9a9a9a;font-weight:400;letter-spacing:0.3px;">2200</div>
<div class="r" style="left:876px;top:17px;width:1px;height:4px;background:#7a7a7a;"></div>
<div class="t" style="left:726.00px;width:400px;text-align:center;top:3.54px;font-size:10px;line-height:10px;color:#9a9a9a;font-weight:400;letter-spacing:0.3px;">2300</div>
<div class="r" style="left:926px;top:17px;width:1px;height:4px;background:#7a7a7a;"></div>
<div class="t" style="left:776.16px;width:400px;text-align:center;top:3.54px;font-size:10px;line-height:10px;color:#9a9a9a;font-weight:400;letter-spacing:0.3px;">2400</div>
<div class="r" style="left:976px;top:17px;width:1px;height:4px;background:#7a7a7a;"></div>
<div class="t" style="left:826.31px;width:400px;text-align:center;top:3.54px;font-size:10px;line-height:10px;color:#9a9a9a;font-weight:400;letter-spacing:0.3px;">2500</div>
<div class="r" style="left:1026px;top:17px;width:1px;height:4px;background:#7a7a7a;"></div>
<div class="t" style="left:876.47px;width:400px;text-align:center;top:3.54px;font-size:10px;line-height:10px;color:#9a9a9a;font-weight:400;letter-spacing:0.3px;">2600</div>
<div class="r" style="left:1076px;top:17px;width:1px;height:4px;background:#7a7a7a;"></div>
<div class="t" style="left:926.63px;width:400px;text-align:center;top:3.54px;font-size:10px;line-height:10px;color:#9a9a9a;font-weight:400;letter-spacing:0.3px;">2700</div>
<div class="r" style="left:1127px;top:17px;width:1px;height:4px;background:#7a7a7a;"></div>
<div class="t" style="left:976.78px;width:400px;text-align:center;top:3.54px;font-size:10px;line-height:10px;color:#9a9a9a;font-weight:400;letter-spacing:0.3px;">2800</div>
<div class="r" style="left:1177px;top:17px;width:1px;height:4px;background:#7a7a7a;"></div>
<div class="t" style="left:1026.94px;width:400px;text-align:center;top:3.54px;font-size:10px;line-height:10px;color:#9a9a9a;font-weight:400;letter-spacing:0.3px;">2900</div>
<div class="r" style="left:1227px;top:17px;width:1px;height:4px;background:#7a7a7a;"></div>
<div class="t" style="left:1077.09px;width:400px;text-align:center;top:3.54px;font-size:10px;line-height:10px;color:#9a9a9a;font-weight:400;letter-spacing:0.3px;">3000</div>
<div class="r" style="left:1277px;top:17px;width:1px;height:4px;background:#7a7a7a;"></div>
<div class="t" style="left:1127.25px;width:400px;text-align:center;top:3.54px;font-size:10px;line-height:10px;color:#9a9a9a;font-weight:400;letter-spacing:0.3px;">3100</div>
<div class="r" style="left:1327px;top:17px;width:1px;height:4px;background:#7a7a7a;"></div>
<div class="t" style="left:1177.41px;width:400px;text-align:center;top:3.54px;font-size:10px;line-height:10px;color:#9a9a9a;font-weight:400;letter-spacing:0.3px;">3200</div>
<div class="r" style="left:1377px;top:17px;width:1px;height:4px;background:#7a7a7a;"></div>
<div class="t" style="left:1227.56px;width:400px;text-align:center;top:3.54px;font-size:10px;line-height:10px;color:#9a9a9a;font-weight:400;letter-spacing:0.3px;">3300</div>
<div class="r" style="left:1428px;top:17px;width:1px;height:4px;background:#7a7a7a;"></div>
<div class="t" style="left:1277.72px;width:400px;text-align:center;top:3.54px;font-size:10px;line-height:10px;color:#9a9a9a;font-weight:400;letter-spacing:0.3px;">3400</div>
<div class="r" style="left:1478px;top:17px;width:1px;height:4px;background:#7a7a7a;"></div>
<div class="t" style="left:1327.87px;width:400px;text-align:center;top:3.54px;font-size:10px;line-height:10px;color:#9a9a9a;font-weight:400;letter-spacing:0.3px;">3500</div>
<div class="r" style="left:1528px;top:17px;width:1px;height:4px;background:#7a7a7a;"></div>
<div class="t" style="left:1378.03px;width:400px;text-align:center;top:3.54px;font-size:10px;line-height:10px;color:#9a9a9a;font-weight:400;letter-spacing:0.3px;">3600</div>
<div class="r" style="left:1578px;top:17px;width:1px;height:4px;background:#7a7a7a;"></div>
<div class="t" style="left:1428.19px;width:400px;text-align:center;top:3.54px;font-size:10px;line-height:10px;color:#9a9a9a;font-weight:400;letter-spacing:0.3px;">3700</div>
<div class="r" style="left:1628px;top:17px;width:1px;height:4px;background:#7a7a7a;"></div>
<div class="t" style="left:1478.34px;width:400px;text-align:center;top:3.54px;font-size:10px;line-height:10px;color:#9a9a9a;font-weight:400;letter-spacing:0.3px;">3800</div>
<div class="r" style="left:1678px;top:17px;width:1px;height:4px;background:#7a7a7a;"></div>
<div class="t" style="left:1528.50px;width:400px;text-align:center;top:3.54px;font-size:10px;line-height:10px;color:#9a9a9a;font-weight:400;letter-spacing:0.3px;">3900</div>
<div class="r" style="left:1728px;top:17px;width:1px;height:4px;background:#7a7a7a;"></div>
<div class="t" style="left:1578.65px;width:400px;text-align:center;top:3.54px;font-size:10px;line-height:10px;color:#9a9a9a;font-weight:400;letter-spacing:0.3px;">4000</div>
<div class="r" style="left:1779px;top:17px;width:1px;height:4px;background:#7a7a7a;"></div>
<div class="t" style="left:1628.81px;width:400px;text-align:center;top:3.54px;font-size:10px;line-height:10px;color:#9a9a9a;font-weight:400;letter-spacing:0.3px;">4100</div>
<div class="r" style="left:1829px;top:17px;width:1px;height:4px;background:#7a7a7a;"></div>
<div class="t" style="left:1678.97px;width:400px;text-align:center;top:3.54px;font-size:10px;line-height:10px;color:#9a9a9a;font-weight:400;letter-spacing:0.3px;">4200</div>
<div class="r" style="left:1879px;top:17px;width:1px;height:4px;background:#7a7a7a;"></div>
<div class="t" style="left:21.00px;width:400px;text-align:right;top:3.54px;font-size:10px;line-height:10px;color:#7ab8ea;font-weight:400;letter-spacing:0.3px;">1307</div>
<div class="t" style="left:325.00px;width:400px;text-align:center;top:3.54px;font-size:10px;line-height:10px;color:#7ab8ea;font-weight:400;letter-spacing:0.3px;">1466</div>
<div class="t" style="left:-91.3px;top:38.25px;width:200px;height:10px;text-align:center;font-size:10px;line-height:10px;color:#5e5e5e;transform:rotate(-90deg);transform-origin:100px 5px;">600</div>
<div class="r" style="left:16px;top:43px;width:4px;height:1px;background:#7a7a7a;"></div>
<div class="t" style="left:-91.3px;top:88.38px;width:200px;height:10px;text-align:center;font-size:10px;line-height:10px;color:#5e5e5e;transform:rotate(-90deg);transform-origin:100px 5px;">700</div>
<div class="r" style="left:16px;top:93px;width:4px;height:1px;background:#7a7a7a;"></div>
<div class="t" style="left:-91.3px;top:238.75px;width:200px;height:10px;text-align:center;font-size:10px;line-height:10px;color:#363636;transform:rotate(-90deg);transform-origin:100px 5px;">1000</div>
<div class="r" style="left:16px;top:244px;width:4px;height:1px;background:#7a7a7a;"></div>
<div class="t" style="left:-91.3px;top:288.88px;width:200px;height:10px;text-align:center;font-size:10px;line-height:10px;color:#9a9a9a;transform:rotate(-90deg);transform-origin:100px 5px;">1100</div>
<div class="r" style="left:16px;top:294px;width:4px;height:1px;background:#7a7a7a;"></div>
<div class="t" style="left:-91.3px;top:339.00px;width:200px;height:10px;text-align:center;font-size:10px;line-height:10px;color:#9a9a9a;transform:rotate(-90deg);transform-origin:100px 5px;">1200</div>
<div class="r" style="left:16px;top:344px;width:4px;height:1px;background:#7a7a7a;"></div>
<div class="t" style="left:-91.3px;top:389.12px;width:200px;height:10px;text-align:center;font-size:10px;line-height:10px;color:#9a9a9a;transform:rotate(-90deg);transform-origin:100px 5px;">1300</div>
<div class="r" style="left:16px;top:394px;width:4px;height:1px;background:#7a7a7a;"></div>
<div class="t" style="left:-91.3px;top:439.25px;width:200px;height:10px;text-align:center;font-size:10px;line-height:10px;color:#9a9a9a;transform:rotate(-90deg);transform-origin:100px 5px;">1400</div>
<div class="r" style="left:16px;top:444px;width:4px;height:1px;background:#7a7a7a;"></div>
<div class="t" style="left:-91.3px;top:489.38px;width:200px;height:10px;text-align:center;font-size:10px;line-height:10px;color:#9a9a9a;transform:rotate(-90deg);transform-origin:100px 5px;">1500</div>
<div class="r" style="left:16px;top:494px;width:4px;height:1px;background:#7a7a7a;"></div>
<div class="t" style="left:-91.3px;top:539.50px;width:200px;height:10px;text-align:center;font-size:10px;line-height:10px;color:#9a9a9a;transform:rotate(-90deg);transform-origin:100px 5px;">1600</div>
<div class="r" style="left:16px;top:544px;width:4px;height:1px;background:#7a7a7a;"></div>
<div class="t" style="left:-91.3px;top:589.62px;width:200px;height:10px;text-align:center;font-size:10px;line-height:10px;color:#9a9a9a;transform:rotate(-90deg);transform-origin:100px 5px;">1700</div>
<div class="r" style="left:16px;top:595px;width:4px;height:1px;background:#7a7a7a;"></div>
<div class="t" style="left:-91.3px;top:639.75px;width:200px;height:10px;text-align:center;font-size:10px;line-height:10px;color:#9a9a9a;transform:rotate(-90deg);transform-origin:100px 5px;">1800</div>
<div class="r" style="left:16px;top:645px;width:4px;height:1px;background:#7a7a7a;"></div>
<div class="t" style="left:-91.3px;top:689.88px;width:200px;height:10px;text-align:center;font-size:10px;line-height:10px;color:#9a9a9a;transform:rotate(-90deg);transform-origin:100px 5px;">1900</div>
<div class="r" style="left:16px;top:695px;width:4px;height:1px;background:#7a7a7a;"></div>
<div class="t" style="left:-91.3px;top:740.00px;width:200px;height:10px;text-align:center;font-size:10px;line-height:10px;color:#9a9a9a;transform:rotate(-90deg);transform-origin:100px 5px;">2000</div>
<div class="r" style="left:16px;top:745px;width:4px;height:1px;background:#7a7a7a;"></div>
<div class="t" style="left:-91.3px;top:790.12px;width:200px;height:10px;text-align:center;font-size:10px;line-height:10px;color:#9a9a9a;transform:rotate(-90deg);transform-origin:100px 5px;">2100</div>
<div class="r" style="left:16px;top:795px;width:4px;height:1px;background:#7a7a7a;"></div>
<div class="t" style="left:-91.3px;top:840.25px;width:200px;height:10px;text-align:center;font-size:10px;line-height:10px;color:#9a9a9a;transform:rotate(-90deg);transform-origin:100px 5px;">2200</div>
<div class="r" style="left:16px;top:845px;width:4px;height:1px;background:#7a7a7a;"></div>
<div class="t" style="left:-91.3px;top:890.38px;width:200px;height:10px;text-align:center;font-size:10px;line-height:10px;color:#9a9a9a;transform:rotate(-90deg);transform-origin:100px 5px;">2300</div>
<div class="r" style="left:16px;top:895px;width:4px;height:1px;background:#7a7a7a;"></div>
<div class="t" style="left:-91.3px;top:940.50px;width:200px;height:10px;text-align:center;font-size:10px;line-height:10px;color:#9a9a9a;transform:rotate(-90deg);transform-origin:100px 5px;">2400</div>
<div class="r" style="left:16px;top:946px;width:4px;height:1px;background:#7a7a7a;"></div>
<div class="t" style="left:-91.3px;top:990.62px;width:200px;height:10px;text-align:center;font-size:10px;line-height:10px;color:#9a9a9a;transform:rotate(-90deg);transform-origin:100px 5px;">2500</div>
<div class="r" style="left:16px;top:996px;width:4px;height:1px;background:#7a7a7a;"></div>
<div class="t" style="left:-91.3px;top:144.00px;width:200px;height:10px;text-align:center;font-size:10px;line-height:10px;color:#7ab8ea;transform:rotate(-90deg);transform-origin:100px 5px;">841</div>
<div class="t" style="left:-91.3px;top:197.00px;width:200px;height:10px;text-align:center;font-size:10px;line-height:10px;color:#7ab8ea;transform:rotate(-90deg);transform-origin:100px 5px;">888</div>
<div class="r" style="left:0px;top:0px;width:21px;height:22px;background:#2c2c2c;"></div>
<div class="r" style="left:0px;top:0px;width:1918px;height:1px;background:#1f1f1f;"></div>
<div class="r" style="left:32px;top:33px;width:240px;height:949px;background:#2c2c2c;border-radius:12px;box-shadow:0 0 3px rgba(0,0,0,0.4);"></div>
<svg class="r" style="left:50px;top:48px;" width="13" height="18" viewBox="0 0 13 18" fill="none"><g stroke="#fff" stroke-width="1.1" fill="none"><path d="M6.65 1.55 H4.1 A2.55 2.55 0 0 0 4.1 6.65 H6.65 Z"/><path d="M6.65 1.55 H9.2 A2.55 2.55 0 0 1 9.2 6.65 H6.65 Z"/><path d="M6.65 6.65 H4.1 A2.55 2.55 0 0 0 4.1 11.75 H6.65 Z"/><circle cx="9.2" cy="9.2" r="2.55"/><path d="M6.65 11.75 H4.1 A2.55 2.55 0 1 0 6.65 14.3 Z"/></g></svg>
<svg class="r" style="left:68px;top:55px;" width="7" height="5" viewBox="0 0 7 5" fill="none"><path d="M1 1.2 L3.5 3.7 L6 1.2" stroke="#fff" stroke-width="1" fill="none"/></svg>
<svg class="r" style="left:239px;top:49px;" width="18" height="15" viewBox="0 0 18 15" fill="none"><rect x="1.5" y="1.5" width="15" height="12" rx="1.5" stroke="#fff" stroke-width="1" fill="none"/><path d="M6.5 1.5 V13.5" stroke="#fff" stroke-width="1"/></svg>
<div class="t" style="left:48.00px;top:81.70px;font-size:13px;line-height:13px;color:#ffffff;font-weight:700;letter-spacing:0px;">Design</div>
<svg class="r" style="left:99px;top:86px;" width="7" height="5" viewBox="0 0 7 5" fill="none"><path d="M1 1.2 L3.5 3.7 L6 1.2" stroke="#fff" stroke-width="1" fill="none"/></svg>
<div class="t" style="left:48.00px;top:101.59px;font-size:11px;line-height:11px;color:#b3b3b3;font-weight:400;letter-spacing:0.3px;-webkit-text-stroke:0.25px currentColor;">Doc + Design</div>
<div class="r" style="left:32px;top:127px;width:240px;height:1px;background:#3e3e3e;"></div>
<div class="r" style="left:40px;top:136px;width:35px;height:24px;background:#383838;border-radius:5px;"></div>
<div class="t" style="left:48.00px;top:142.89px;font-size:11px;line-height:11px;color:#ffffff;font-weight:700;letter-spacing:0.2px;">File</div>
<div class="t" style="left:92.00px;top:142.89px;font-size:11px;line-height:11px;color:#b3b3b3;font-weight:400;letter-spacing:0.3px;-webkit-text-stroke:0.25px currentColor;">Assets</div>
<svg class="r" style="left:243px;top:139px;" width="17" height="17" viewBox="0 0 17 17" fill="none"><circle cx="7.5" cy="7.5" r="5.2" stroke="#fff" stroke-width="1.1" fill="none"/><path d="M11.3 11.3 L15 15" stroke="#fff" stroke-width="1.1"/></svg>
<div class="r" style="left:32px;top:168px;width:240px;height:1px;background:#3e3e3e;"></div>
<svg class="r" style="left:36px;top:186px;" width="7" height="5" viewBox="0 0 7 5" fill="none"><path d="M1 1.2 L3.5 3.7 L6 1.2" stroke="#9a9a9a" stroke-width="1" fill="none"/></svg>
<div class="t" style="left:48.00px;top:184.19px;font-size:11px;line-height:11px;color:#ffffff;font-weight:700;letter-spacing:0.2px;">Pages</div>
<svg class="r" style="left:245px;top:182px;" width="13" height="13" viewBox="0 0 13 13" fill="none"><path d="M6.5 1 V12 M1 6.5 H12" stroke="#fff" stroke-width="1.1"/></svg>
<div class="r" style="left:32px;top:209px;width:240px;height:1px;background:#3e3e3e;"></div>
<div class="t" style="left:48.00px;top:211.99px;font-size:11px;line-height:11px;color:#e6e6e6;font-weight:400;letter-spacing:-0.15px;-webkit-text-stroke:0.25px currentColor;">HIFI MOODBAORD</div>
<div class="t" style="left:48.00px;top:243.99px;font-size:11px;line-height:11px;color:#e6e6e6;font-weight:400;letter-spacing:0.3px;-webkit-text-stroke:0.25px currentColor;">Patient_Final_Flows</div>
<div class="t" style="left:48.00px;top:275.99px;font-size:11px;line-height:11px;color:#e6e6e6;font-weight:400;letter-spacing:0.3px;-webkit-text-stroke:0.25px currentColor;">Patient.Side.Deliverable</div>
<div class="t" style="left:48.00px;top:307.99px;font-size:11px;line-height:11px;color:#e6e6e6;font-weight:400;letter-spacing:0.3px;-webkit-text-stroke:0.25px currentColor;">Admin.Side.Deliverable</div>
<div class="r" style="left:48px;top:345px;width:208px;height:1px;background:#3e3e3e;"></div>
<div class="r" style="left:40px;top:365px;width:224px;height:24px;background:#383838;border-radius:5px;"></div>
<div class="t" style="left:48.00px;top:371.99px;font-size:11px;line-height:11px;color:#ffffff;font-weight:700;letter-spacing:0.1px;">Design System</div>
<div class="t" style="left:48.00px;top:403.99px;font-size:11px;line-height:11px;color:#e6e6e6;font-weight:400;letter-spacing:0.35px;-webkit-text-stroke:0.25px currentColor;">Design Export - Redacted</div>
<div class="r" style="left:32px;top:424px;width:240px;height:1px;background:#3e3e3e;"></div>
<svg class="r" style="left:36px;top:442px;" width="7" height="5" viewBox="0 0 7 5" fill="none"><path d="M1 1.2 L3.5 3.7 L6 1.2" stroke="#9a9a9a" stroke-width="1" fill="none"/></svg>
<div class="t" style="left:48.00px;top:439.89px;font-size:11px;line-height:11px;color:#ffffff;font-weight:700;letter-spacing:0.2px;">Layers</div>
<div class="r" style="left:32px;top:464px;width:240px;height:1px;background:#3e3e3e;"></div>
<div class="r" style="left:44px;top:469px;width:220px;height:24px;background:#4a5a7c;border-radius:5px;"></div>
<svg class="r" style="left:49px;top:474px;" width="14" height="14" viewBox="0 0 14 14" fill="none"><path d="M7 1 L13 7 L7 13 L1 7 Z" stroke="#8e73b0" stroke-width="1" fill="none"/></svg>
<div class="t" style="left:72.00px;top:475.99px;font-size:11px;line-height:11px;color:#d3b2ff;font-weight:400;letter-spacing:0.3px;-webkit-text-stroke:0.25px currentColor;">Buttons</div>
<svg class="r" style="left:49px;top:506px;" width="14" height="14" viewBox="0 0 14 14" fill="none"><g stroke="#c9a6ef" stroke-width="1.1" fill="none"><path d="M7 1.2 L9 3.2 L7 5.2 L5 3.2 Z"/><path d="M7 8.8 L9 10.8 L7 12.8 L5 10.8 Z"/><path d="M3.2 5 L5.2 7 L3.2 9 L1.2 7 Z"/><path d="M10.8 5 L12.8 7 L10.8 9 L8.8 7 Z"/></g></svg>
<div class="t" style="left:72.00px;top:507.99px;font-size:11px;line-height:11px;color:#d3b2ff;font-weight:700;letter-spacing:0.15px;">Buttons</div>
<svg class="r" style="left:73px;top:537.8px;" width="14" height="14" viewBox="0 0 14 14" fill="none"><path d="M7 0.8 L13.2 7 L7 13.2 L0.8 7 Z" fill="#7f69a0"/></svg>
<div class="t" style="left:96.00px;top:539.99px;font-size:11px;line-height:11px;color:#d0aef4;font-weight:400;letter-spacing:0.35px;-webkit-text-stroke:0.25px currentColor;">Disabled, L, Outlined, Left</div>
<svg class="r" style="left:73px;top:569.8px;" width="14" height="14" viewBox="0 0 14 14" fill="none"><path d="M7 0.8 L13.2 7 L7 13.2 L0.8 7 Z" fill="#7f69a0"/></svg>
<div class="t" style="left:96.00px;top:571.99px;font-size:11px;line-height:11px;color:#d0aef4;font-weight:400;letter-spacing:0.35px;-webkit-text-stroke:0.25px currentColor;">Disabled, L, Outlined, Center</div>
<svg class="r" style="left:73px;top:601.8px;" width="14" height="14" viewBox="0 0 14 14" fill="none"><path d="M7 0.8 L13.2 7 L7 13.2 L0.8 7 Z" fill="#7f69a0"/></svg>
<div class="t" style="left:96.00px;top:603.99px;font-size:11px;line-height:11px;color:#d0aef4;font-weight:400;letter-spacing:0.35px;-webkit-text-stroke:0.25px currentColor;">Pressed, L, Outlined, Left</div>
<svg class="r" style="left:73px;top:633.8px;" width="14" height="14" viewBox="0 0 14 14" fill="none"><path d="M7 0.8 L13.2 7 L7 13.2 L0.8 7 Z" fill="#7f69a0"/></svg>
<div class="t" style="left:96.00px;top:635.99px;font-size:11px;line-height:11px;color:#d0aef4;font-weight:400;letter-spacing:0.35px;-webkit-text-stroke:0.25px currentColor;">Pressed, L, Outlined, Center</div>
<svg class="r" style="left:73px;top:665.8px;" width="14" height="14" viewBox="0 0 14 14" fill="none"><path d="M7 0.8 L13.2 7 L7 13.2 L0.8 7 Z" fill="#7f69a0"/></svg>
<div class="t" style="left:96.00px;top:667.99px;font-size:11px;line-height:11px;color:#d0aef4;font-weight:400;letter-spacing:0.35px;-webkit-text-stroke:0.25px currentColor;">Disabled, S, Outlined, Center</div>
<svg class="r" style="left:73px;top:697.8px;" width="14" height="14" viewBox="0 0 14 14" fill="none"><path d="M7 0.8 L13.2 7 L7 13.2 L0.8 7 Z" fill="#7f69a0"/></svg>
<div class="t" style="left:96.00px;top:699.99px;font-size:11px;line-height:11px;color:#d0aef4;font-weight:400;letter-spacing:0.35px;-webkit-text-stroke:0.25px currentColor;">Pressed, S, Outlined, Center</div>
<svg class="r" style="left:73px;top:729.8px;" width="14" height="14" viewBox="0 0 14 14" fill="none"><path d="M7 0.8 L13.2 7 L7 13.2 L0.8 7 Z" fill="#7f69a0"/></svg>
<div class="t" style="left:96.00px;top:731.99px;font-size:11px;line-height:11px;color:#d0aef4;font-weight:400;letter-spacing:0.35px;-webkit-text-stroke:0.25px currentColor;">Disabled, L, Filled, Center</div>
<svg class="r" style="left:73px;top:761.8px;" width="14" height="14" viewBox="0 0 14 14" fill="none"><path d="M7 0.8 L13.2 7 L7 13.2 L0.8 7 Z" fill="#7f69a0"/></svg>
<div class="t" style="left:96.00px;top:763.99px;font-size:11px;line-height:11px;color:#d0aef4;font-weight:400;letter-spacing:0.35px;-webkit-text-stroke:0.25px currentColor;">Pressed, L, Filled, Center</div>
<svg class="r" style="left:98px;top:795px;" width="13" height="12" viewBox="0 0 13 12" fill="none"><rect x="1.5" y="1.5" width="3.5" height="9" stroke="#8c72b2" stroke-width="0.9" fill="none"/><rect x="7.5" y="3.3" width="3" height="5.5" stroke="#8c72b2" stroke-width="0.9" fill="none"/></svg>
<div class="t" style="left:120.00px;top:795.69px;font-size:11px;line-height:11px;color:#d0aef4;font-weight:400;letter-spacing:0.3px;-webkit-text-stroke:0.25px currentColor;">Content</div>
<svg class="r" style="left:121px;top:825.5px;" width="14" height="14" viewBox="0 0 14 14" fill="none"><path d="M7 1.2 L12.8 7 L7 12.8 L1.2 7 Z" stroke="#8c72b2" stroke-width="1" fill="none"/></svg>
<div class="t" style="left:144.00px;top:827.69px;font-size:11px;line-height:11px;color:#d0aef4;font-weight:400;letter-spacing:0.3px;-webkit-text-stroke:0.25px currentColor;">icon / feathericons / ...</div>
<svg class="r" style="left:122px;top:859px;" width="11" height="11" viewBox="0 0 11 11" fill="none"><path d="M1 1.5 H10 M5.5 1.5 V10 M4 10 H7 M1 1.5 V2.8 M10 1.5 V2.8" stroke="#8c72b2" stroke-width="0.9" fill="none"/></svg>
<div class="t" style="left:144.00px;top:859.69px;font-size:11px;line-height:11px;color:#d0aef4;font-weight:400;letter-spacing:0.3px;-webkit-text-stroke:0.25px currentColor;">Continue</div>
<svg class="r" style="left:121px;top:889.5px;" width="14" height="14" viewBox="0 0 14 14" fill="none"><path d="M7 1.2 L12.8 7 L7 12.8 L1.2 7 Z" stroke="#8c72b2" stroke-width="1" fill="none"/></svg>
<div class="t" style="left:144.00px;top:891.69px;font-size:11px;line-height:11px;color:#d0aef4;font-weight:400;letter-spacing:0.3px;-webkit-text-stroke:0.25px currentColor;">icon / feathericons / ...</div>
<svg class="r" style="left:73px;top:921.5px;" width="14" height="14" viewBox="0 0 14 14" fill="none"><path d="M7 0.8 L13.2 7 L7 13.2 L0.8 7 Z" fill="#7f69a0"/></svg>
<div class="t" style="left:96.00px;top:923.69px;font-size:11px;line-height:11px;color:#d0aef4;font-weight:400;letter-spacing:0.35px;-webkit-text-stroke:0.25px currentColor;">Disabled, S, Filled, Center</div>
<svg class="r" style="left:73px;top:953.5px;" width="14" height="14" viewBox="0 0 14 14" fill="none"><path d="M7 0.8 L13.2 7 L7 13.2 L0.8 7 Z" fill="#7f69a0"/></svg>
<div class="t" style="left:96.00px;top:955.69px;font-size:11px;line-height:11px;color:#d0aef4;font-weight:400;letter-spacing:0.35px;-webkit-text-stroke:0.25px currentColor;">Pressed, S, Filled, Center</div>
<div class="r" style="left:1665px;top:33px;width:241px;height:949px;background:#2c2c2c;border-radius:12px;box-shadow:0 0 3px rgba(0,0,0,0.4);"></div>
<div class="r" style="left:1677px;top:45px;width:24px;height:24px;background:#0a7fe3;border-radius:50%;"></div>
<div class="t" style="left:1489.00px;width:400px;text-align:center;top:51.57px;font-size:11.5px;line-height:11.5px;color:#ffffff;font-weight:700;letter-spacing:0px;">K</div>
<svg class="r" style="left:1706px;top:55px;" width="8" height="5" viewBox="0 0 8 5" fill="none"><path d="M1.2 1 L4 3.8 L6.8 1" stroke="#fff" stroke-width="1" fill="none"/></svg>
<svg class="r" style="left:1799px;top:48px;" width="16" height="18" viewBox="0 0 16 18" fill="none"><path d="M2.5 2.2 L13.5 9 L2.5 15.8 Z" stroke="#fff" stroke-width="1.2" stroke-linejoin="round" fill="none"/></svg>
<svg class="r" style="left:1827px;top:54px;" width="8" height="5" viewBox="0 0 8 5" fill="none"><path d="M1.2 1 L4 3.8 L6.8 1" stroke="#fff" stroke-width="1" fill="none"/></svg>
<div class="r" style="left:1843px;top:41px;width:55px;height:32px;background:#0d8ee6;border-radius:5px;"></div>
<div class="t" style="left:1856.00px;top:51.69px;font-size:11px;line-height:11px;color:#ffffff;font-weight:700;letter-spacing:0.2px;">Share</div>
<div class="r" style="left:1673px;top:81px;width:53px;height:24px;background:#383838;border-radius:5px;"></div>
<div class="t" style="left:1681.00px;top:88.49px;font-size:11px;line-height:11px;color:#ffffff;font-weight:700;letter-spacing:0.1px;">Design</div>
<div class="t" style="left:1742.40px;top:88.49px;font-size:11px;line-height:11px;color:#bdbdbd;font-weight:400;letter-spacing:0.3px;-webkit-text-stroke:0.25px currentColor;">Prototype</div>
<div class="t" style="left:1845.60px;top:88.49px;font-size:11px;line-height:11px;color:#ffffff;font-weight:700;letter-spacing:0.2px;">50%</div>
<svg class="r" style="left:1882px;top:91px;" width="8" height="5" viewBox="0 0 8 5" fill="none"><path d="M1.2 1 L4 3.8 L6.8 1" stroke="#fff" stroke-width="1" fill="none"/></svg>
<div class="r" style="left:1665px;top:113px;width:241px;height:1px;background:#3e3e3e;"></div>
<div class="t" style="left:1682.00px;top:132.20px;font-size:13px;line-height:13px;color:#ffffff;font-weight:700;letter-spacing:0px;">Buttons</div>
<svg class="r" style="left:1739px;top:137px;" width="8" height="5" viewBox="0 0 8 5" fill="none"><path d="M1.2 1 L4 3.8 L6.8 1" stroke="#fff" stroke-width="1" fill="none"/></svg>
<svg class="r" style="left:1851px;top:131px;" width="15" height="15" viewBox="0 0 15 15" fill="none"><g stroke="#fff" stroke-width="1.3" fill="none"><path d="M7.5 1 L9.8 3.3 L7.5 5.6 L5.2 3.3 Z"/><path d="M7.5 9.4 L9.8 11.7 L7.5 14 L5.2 11.7 Z"/><path d="M3.3 5.2 L5.6 7.5 L3.3 9.8 L1 7.5 Z"/><path d="M11.7 5.2 L14 7.5 L11.7 9.8 L9.4 7.5 Z"/></g></svg>
<div class="r" style="left:1878.1px;top:136.2px;width:2.9px;height:2.9px;background:#fff;border-radius:50%;"></div>
<div class="r" style="left:1884.1px;top:136.2px;width:2.9px;height:2.9px;background:#fff;border-radius:50%;"></div>
<div class="r" style="left:1890.1px;top:136.2px;width:2.9px;height:2.9px;background:#fff;border-radius:50%;"></div>
<div class="t" style="left:1681.00px;top:165.19px;font-size:11px;line-height:11px;color:#bdbdbd;font-weight:400;letter-spacing:0.3px;-webkit-text-stroke:0.25px currentColor;">Local instance</div>
<svg class="r" style="left:1766px;top:163px;" width="14" height="14" viewBox="0 0 14 14" fill="none"><path d="M7 1 L13 7 L7 13 L1 7 Z" stroke="#d0d0d0" stroke-width="1" fill="none"/></svg>
<svg class="r" style="left:1681px;top:196.5px;" width="12" height="9" viewBox="0 0 12 9" fill="none"><path d="M1.5 0.5 V5.2 H10 M7.2 2.4 L10 5.2 L7.2 8" stroke="#bdbdbd" stroke-width="1.1" fill="none"/></svg>
<div class="t" style="left:1695.00px;top:196.69px;font-size:11px;line-height:11px;color:#bdbdbd;font-weight:400;letter-spacing:0.3px;-webkit-text-stroke:0.25px currentColor;">State</div>
<div class="r" style="left:1778px;top:190px;width:88px;height:24px;background:transparent;border:1px solid #444444;border-radius:5px;"></div>
<div class="t" style="left:1785.50px;top:196.69px;font-size:11px;line-height:11px;color:#ffffff;font-weight:700;letter-spacing:0.1px;">Hover</div>
<svg class="r" style="left:1849px;top:200px;" width="8" height="5" viewBox="0 0 8 5" fill="none"><path d="M1.2 1 L4 3.8 L6.8 1" stroke="#fff" stroke-width="1" fill="none"/></svg>
<svg class="r" style="left:1681px;top:228.5px;" width="12" height="9" viewBox="0 0 12 9" fill="none"><path d="M1.5 0.5 V5.2 H10 M7.2 2.4 L10 5.2 L7.2 8" stroke="#bdbdbd" stroke-width="1.1" fill="none"/></svg>
<div class="t" style="left:1695.00px;top:228.69px;font-size:11px;line-height:11px;color:#bdbdbd;font-weight:400;letter-spacing:0.3px;-webkit-text-stroke:0.25px currentColor;">Size</div>
<div class="r" style="left:1778px;top:222px;width:88px;height:24px;background:transparent;border:1px solid #444444;border-radius:5px;"></div>
<div class="t" style="left:1785.50px;top:228.69px;font-size:11px;line-height:11px;color:#ffffff;font-weight:700;letter-spacing:0.1px;">L</div>
<svg class="r" style="left:1849px;top:232px;" width="8" height="5" viewBox="0 0 8 5" fill="none"><path d="M1.2 1 L4 3.8 L6.8 1" stroke="#fff" stroke-width="1" fill="none"/></svg>
<svg class="r" style="left:1681px;top:260.5px;" width="12" height="9" viewBox="0 0 12 9" fill="none"><path d="M1.5 0.5 V5.2 H10 M7.2 2.4 L10 5.2 L7.2 8" stroke="#bdbdbd" stroke-width="1.1" fill="none"/></svg>
<div class="t" style="left:1695.00px;top:260.69px;font-size:11px;line-height:11px;color:#bdbdbd;font-weight:400;letter-spacing:0.3px;-webkit-text-stroke:0.25px currentColor;">Style</div>
<div class="r" style="left:1778px;top:254px;width:88px;height:24px;background:transparent;border:1px solid #444444;border-radius:5px;"></div>
<div class="t" style="left:1785.50px;top:260.69px;font-size:11px;line-height:11px;color:#ffffff;font-weight:700;letter-spacing:0.1px;">Filled</div>
<svg class="r" style="left:1849px;top:264px;" width="8" height="5" viewBox="0 0 8 5" fill="none"><path d="M1.2 1 L4 3.8 L6.8 1" stroke="#fff" stroke-width="1" fill="none"/></svg>
<div class="t" style="left:1681.00px;top:292.69px;font-size:11px;line-height:11px;color:#bdbdbd;font-weight:400;letter-spacing:0.2px;-webkit-text-stroke:0.25px currentColor;">Alignment</div>
<div class="r" style="left:1778px;top:286px;width:88px;height:24px;background:transparent;border:1px solid #444444;border-radius:5px;"></div>
<div class="t" style="left:1785.50px;top:292.69px;font-size:11px;line-height:11px;color:#ffffff;font-weight:700;letter-spacing:0.1px;">Center</div>
<svg class="r" style="left:1849px;top:296px;" width="8" height="5" viewBox="0 0 8 5" fill="none"><path d="M1.2 1 L4 3.8 L6.8 1" stroke="#fff" stroke-width="1" fill="none"/></svg>
<svg class="r" style="left:1681px;top:325px;" width="12" height="9" viewBox="0 0 12 9" fill="none"><path d="M1.5 0.5 V5.2 H10 M7.2 2.4 L10 5.2 L7.2 8" stroke="#bdbdbd" stroke-width="1.1" fill="none"/></svg>
<div class="t" style="left:1695.00px;top:324.89px;font-size:11px;line-height:11px;color:#bdbdbd;font-weight:400;letter-spacing:0.3px;-webkit-text-stroke:0.25px currentColor;">Show Label</div>
<div class="r" style="left:1778px;top:322px;width:32px;height:16px;background:#0d8ee6;border-radius:8px;"></div>
<div class="r" style="left:1794.8px;top:323.2px;width:13.8px;height:13.8px;background:#ffffff;border-radius:50%;"></div>
<svg class="r" style="left:1682px;top:356px;" width="13" height="13" viewBox="0 0 13 13" fill="none"><g transform="rotate(45 6.5 6.5)"><rect x="4.8" y="-0.8" width="3.4" height="3" fill="#e0435a" rx="0.6"/><rect x="4.8" y="2.2" width="3.4" height="8" fill="#e5833a"/><path d="M4.8 10.2 L6.5 13.4 L8.2 10.2 Z" fill="#f1c69a"/></g></svg>
<div class="t" style="left:1699.50px;top:357.19px;font-size:11px;line-height:11px;color:#bdbdbd;font-weight:400;letter-spacing:0.3px;-webkit-text-stroke:0.25px currentColor;">Label</div>
<div class="r" style="left:1778px;top:350px;width:88px;height:24px;background:#383838;border-radius:5px;"></div>
<div class="t" style="left:1785.70px;top:357.19px;font-size:11px;line-height:11px;color:#ffffff;font-weight:400;letter-spacing:0.35px;-webkit-text-stroke:0.25px currentColor;">Continue</div>
<svg class="r" style="left:1681px;top:389px;" width="12" height="9" viewBox="0 0 12 9" fill="none"><path d="M1.5 0.5 V5.2 H10 M7.2 2.4 L10 5.2 L7.2 8" stroke="#bdbdbd" stroke-width="1.1" fill="none"/></svg>
<div class="t" style="left:1695.00px;top:388.89px;font-size:11px;line-height:11px;color:#bdbdbd;font-weight:400;letter-spacing:0.3px;-webkit-text-stroke:0.25px currentColor;">Left Icon</div>
<div class="r" style="left:1778px;top:386px;width:32px;height:16px;background:#0d8ee6;border-radius:8px;"></div>
<div class="r" style="left:1794.8px;top:387.2px;width:13.8px;height:13.8px;background:#ffffff;border-radius:50%;"></div>
<svg class="r" style="left:1682px;top:420px;" width="13" height="13" viewBox="0 0 13 13" fill="none"><g transform="rotate(45 6.5 6.5)"><rect x="4.8" y="-0.8" width="3.4" height="3" fill="#e0435a" rx="0.6"/><rect x="4.8" y="2.2" width="3.4" height="8" fill="#e5833a"/><path d="M4.8 10.2 L6.5 13.4 L8.2 10.2 Z" fill="#f1c69a"/></g></svg>
<div class="t" style="left:1699.50px;top:421.19px;font-size:11px;line-height:11px;color:#bdbdbd;font-weight:400;letter-spacing:0.3px;-webkit-text-stroke:0.25px currentColor;">Icon_L</div>
<div class="r" style="left:1778px;top:414px;width:88px;height:24px;background:transparent;border:1px solid #444444;border-radius:5px;"></div>
<svg class="r" style="left:1784px;top:419px;" width="14" height="14" viewBox="0 0 14 14" fill="none"><path d="M7 1 L13 7 L7 13 L1 7 Z" stroke="#fff" stroke-width="1" fill="none"/></svg>
<div class="t" style="left:1802.60px;top:421.19px;font-size:11px;line-height:11px;color:#ffffff;font-weight:700;letter-spacing:0px;">arro...</div>
<svg class="r" style="left:1849px;top:424px;" width="8" height="5" viewBox="0 0 8 5" fill="none"><path d="M1.2 1 L4 3.8 L6.8 1" stroke="#fff" stroke-width="1" fill="none"/></svg>
<svg class="r" style="left:1681px;top:453px;" width="12" height="9" viewBox="0 0 12 9" fill="none"><path d="M1.5 0.5 V5.2 H10 M7.2 2.4 L10 5.2 L7.2 8" stroke="#bdbdbd" stroke-width="1.1" fill="none"/></svg>
<div class="t" style="left:1695.00px;top:452.89px;font-size:11px;line-height:11px;color:#bdbdbd;font-weight:400;letter-spacing:0.3px;-webkit-text-stroke:0.25px currentColor;">Right Icon</div>
<div class="r" style="left:1778px;top:450px;width:32px;height:16px;background:#0d8ee6;border-radius:8px;"></div>
<div class="r" style="left:1794.8px;top:451.2px;width:13.8px;height:13.8px;background:#ffffff;border-radius:50%;"></div>
<svg class="r" style="left:1682px;top:484px;" width="13" height="13" viewBox="0 0 13 13" fill="none"><g transform="rotate(45 6.5 6.5)"><rect x="4.8" y="-0.8" width="3.4" height="3" fill="#e0435a" rx="0.6"/><rect x="4.8" y="2.2" width="3.4" height="8" fill="#e5833a"/><path d="M4.8 10.2 L6.5 13.4 L8.2 10.2 Z" fill="#f1c69a"/></g></svg>
<div class="t" style="left:1699.50px;top:485.19px;font-size:11px;line-height:11px;color:#bdbdbd;font-weight:400;letter-spacing:0.3px;-webkit-text-stroke:0.25px currentColor;">Icon_R</div>
<div class="r" style="left:1778px;top:478px;width:88px;height:24px;background:transparent;border:1px solid #444444;border-radius:5px;"></div>
<svg class="r" style="left:1784px;top:483px;" width="14" height="14" viewBox="0 0 14 14" fill="none"><path d="M7 1 L13 7 L7 13 L1 7 Z" stroke="#fff" stroke-width="1" fill="none"/></svg>
<div class="t" style="left:1802.60px;top:485.19px;font-size:11px;line-height:11px;color:#ffffff;font-weight:700;letter-spacing:0px;">arro...</div>
<svg class="r" style="left:1849px;top:488px;" width="8" height="5" viewBox="0 0 8 5" fill="none"><path d="M1.2 1 L4 3.8 L6.8 1" stroke="#fff" stroke-width="1" fill="none"/></svg>
<div class="r" style="left:1665px;top:514px;width:241px;height:1px;background:#3e3e3e;"></div>
<div class="t" style="left:1681.00px;top:530.29px;font-size:11px;line-height:11px;color:#ffffff;font-weight:700;letter-spacing:0.2px;">Position</div>
<div class="r" style="left:1681px;top:559px;width:88px;height:24px;background:#383838;border-radius:5px;"></div>
<div class="r" style="left:1710px;top:559px;width:1px;height:24px;background:#2c2c2c;"></div>
<div class="r" style="left:1740px;top:559px;width:1px;height:24px;background:#2c2c2c;"></div>
<div class="r" style="left:1778px;top:559px;width:88px;height:24px;background:#383838;border-radius:5px;"></div>
<div class="r" style="left:1806px;top:559px;width:1px;height:24px;background:#2c2c2c;"></div>
<div class="r" style="left:1836px;top:559px;width:1px;height:24px;background:#2c2c2c;"></div>
<svg class="r" style="left:1681px;top:559px;" width="88" height="24" viewBox="0 0 88 24" fill="none"><g fill="#a9a9a9"><rect x="7" y="5" width="1.1" height="13"/><rect x="9" y="8.5" width="11" height="1.4"/><rect x="9" y="13.3" width="7" height="1.4"/><rect x="44.2" y="5" width="1.1" height="13"/><rect x="39.2" y="8.5" width="11" height="1.4"/><rect x="41.2" y="13.3" width="7" height="1.4"/><rect x="80" y="5" width="1.1" height="13"/><rect x="67.8" y="8.5" width="11" height="1.4"/><rect x="71.8" y="13.3" width="7" height="1.4"/></g></svg>
<svg class="r" style="left:1778px;top:559px;" width="88" height="24" viewBox="0 0 88 24" fill="none"><g fill="#a9a9a9"><rect x="7" y="5" width="13" height="1.1"/><rect x="9.5" y="7" width="1.4" height="11"/><rect x="15.8" y="7" width="1.4" height="6.5"/><rect x="37" y="11.2" width="13" height="1.1"/><rect x="40" y="6" width="1.4" height="11.5"/><rect x="46" y="8" width="1.4" height="7.5"/><rect x="67" y="18" width="13" height="1.1"/><rect x="70" y="6" width="1.4" height="11"/><rect x="76" y="11" width="1.4" height="6"/></g></svg>
<div class="r" style="left:1681px;top:591px;width:89px;height:24px;background:#383838;border-radius:5px;"></div>
<div class="t" style="left:1689.60px;top:598.19px;font-size:11px;line-height:11px;color:#bdbdbd;font-weight:400;letter-spacing:0px;-webkit-text-stroke:0.25px currentColor;">X</div>
<div class="t" style="left:1705.00px;top:598.19px;font-size:11px;line-height:11px;color:#ffffff;font-weight:400;letter-spacing:0.2px;-webkit-text-stroke:0.25px currentColor;">1307</div>
<div class="r" style="left:1778px;top:591px;width:88px;height:24px;background:#383838;border-radius:5px;"></div>
<div class="t" style="left:1785.70px;top:598.19px;font-size:11px;line-height:11px;color:#bdbdbd;font-weight:400;letter-spacing:0px;-webkit-text-stroke:0.25px currentColor;">Y</div>
<div class="t" style="left:1801.70px;top:598.19px;font-size:11px;line-height:11px;color:#ffffff;font-weight:400;letter-spacing:0.2px;-webkit-text-stroke:0.25px currentColor;">841</div>
<div class="r" style="left:1681px;top:623px;width:89px;height:24px;background:#383838;border-radius:5px;"></div>
<svg class="r" style="left:1688px;top:630px;" width="10" height="10" viewBox="0 0 10 10" fill="none"><path d="M1 0.5 V9 H9 M1 4.5 A4.5 4.5 0 0 1 5.5 9" stroke="#bdbdbd" stroke-width="1" fill="none"/></svg>
<div class="t" style="left:1705.00px;top:629.69px;font-size:11px;line-height:11px;color:#ffffff;font-weight:400;letter-spacing:0.2px;-webkit-text-stroke:0.25px currentColor;">0°</div>
<div class="r" style="left:1778px;top:623px;width:88px;height:24px;background:#383838;border-radius:5px;"></div>
<div class="r" style="left:1806px;top:623px;width:1px;height:24px;background:#2c2c2c;"></div>
<div class="r" style="left:1836px;top:623px;width:1px;height:24px;background:#2c2c2c;"></div>
<svg class="r" style="left:1778px;top:623px;" width="88" height="24" viewBox="0 0 88 24" fill="none"><g stroke="#d8d8d8" stroke-width="1" fill="none"><path d="M14 8.5 L18.5 13 L14 17.5 L9.5 13 Z"/><path d="M9.8 8 A5 5 0 0 1 18.6 6.5"/><path d="M18.8 4.2 V7 H16"/><path d="M43.5 5 V19" /><path d="M37.5 9 V15 L41 12 Z"/><path d="M49.5 9 V15 L46 12 Z"/><path d="M65.5 11.5 H79.5"/><path d="M69.5 5.5 H75.5 L72.5 9 Z"/><path d="M69.5 17.5 H75.5 L72.5 14 Z"/></g></svg>
<div class="r" style="left:1665px;top:663px;width:241px;height:1px;background:#3e3e3e;"></div>
<div class="t" style="left:1681.00px;top:679.19px;font-size:11px;line-height:11px;color:#ffffff;font-weight:700;letter-spacing:0.2px;">Auto layout</div>
<svg class="r" style="left:1851px;top:677px;" width="14" height="14" viewBox="0 0 14 14" fill="none"><g stroke="#fff" stroke-width="1" fill="none"><path d="M1 1 L4.5 4.5 M1.5 4.5 H4.5 V1.5"/><path d="M13 1 L9.5 4.5 M12.5 4.5 H9.5 V1.5"/><path d="M1 13 L4.5 9.5 M1.5 9.5 H4.5 V12.5"/><path d="M13 13 L9.5 9.5 M12.5 9.5 H9.5 V12.5"/></g></svg>
<svg class="r" style="left:1879px;top:677px;" width="14" height="14" viewBox="0 0 14 14" fill="none"><g stroke="#fff" stroke-width="1" fill="none"><rect x="1" y="1" width="4" height="12" rx="1"/><rect x="8.5" y="1" width="4" height="4" rx="1"/><path d="M10.5 7.5 V12.8 M7.8 10.2 H13.2"/></g></svg>
<div class="r" style="left:1681px;top:708px;width:89px;height:24px;background:#383838;border-radius:5px;"></div>
<div class="t" style="left:1687.70px;top:714.59px;font-size:11px;line-height:11px;color:#a6a6a6;font-weight:400;letter-spacing:0px;-webkit-text-stroke:0.25px currentColor;">W</div>
<div class="t" style="left:1704.80px;top:714.59px;font-size:11px;line-height:11px;color:#a6a6a6;font-weight:400;letter-spacing:0.2px;-webkit-text-stroke:0.25px currentColor;">159</div>
<div class="t" style="left:1738.80px;top:714.59px;font-size:11px;line-height:11px;color:#ffffff;font-weight:700;letter-spacing:0px;">Hug</div>
<div class="r" style="left:1778px;top:708px;width:88px;height:24px;background:#383838;border-radius:5px;"></div>
<div class="t" style="left:1785.50px;top:714.59px;font-size:11px;line-height:11px;color:#a6a6a6;font-weight:400;letter-spacing:0px;-webkit-text-stroke:0.25px currentColor;">H</div>
<div class="t" style="left:1801.60px;top:714.59px;font-size:11px;line-height:11px;color:#ffffff;font-weight:700;letter-spacing:0.2px;">47</div>
<svg class="r" style="left:1849px;top:718px;" width="8" height="5" viewBox="0 0 8 5" fill="none"><path d="M1.2 1 L4 3.8 L6.8 1" stroke="#fff" stroke-width="1" fill="none"/></svg>
<div class="r" style="left:1681px;top:740px;width:89px;height:24px;background:#383838;border-radius:5px;"></div>
<div class="r" style="left:1681px;top:740px;width:30px;height:24px;background:#2c2c2c;border:1px solid #444;border-radius:5px;"></div>
<svg class="r" style="left:1681px;top:740px;" width="89" height="24" viewBox="0 0 89 24" fill="none"><g stroke="#fff" stroke-width="1.1" fill="none"><path d="M15 6.5 V17 M11.5 13.5 L15 17 L18.5 13.5"/></g><g stroke="#bdbdbd" stroke-width="1" fill="none"><path d="M39 12 H50 M46.5 8.5 L50 12 L46.5 15.5"/><path d="M73 8.5 H77 A3.5 3.5 0 0 1 77 15.5 H69.5 M72.3 12.7 L69.5 15.5 L72.3 18.3"/></g></svg>
<div class="r" style="left:1778px;top:740px;width:88px;height:56px;background:#383838;border-radius:5px;"></div>
<div class="r" style="left:1792px;top:752px;width:2px;height:2px;background:#8f8f8f;"></div>
<div class="r" style="left:1792px;top:767px;width:2px;height:2px;background:#8f8f8f;"></div>
<div class="r" style="left:1792px;top:782px;width:2px;height:2px;background:#8f8f8f;"></div>
<div class="r" style="left:1821px;top:752px;width:2px;height:2px;background:#8f8f8f;"></div>
<div class="r" style="left:1821px;top:782px;width:2px;height:2px;background:#8f8f8f;"></div>
<div class="r" style="left:1850px;top:752px;width:2px;height:2px;background:#8f8f8f;"></div>
<div class="r" style="left:1850px;top:767px;width:2px;height:2px;background:#8f8f8f;"></div>
<div class="r" style="left:1850px;top:782px;width:2px;height:2px;background:#8f8f8f;"></div>
<div class="r" style="left:1819px;top:764px;width:6px;height:2px;background:#7cc4f8;border-radius:1px;"></div>
<div class="r" style="left:1817px;top:767px;width:10px;height:2px;background:#7cc4f8;border-radius:1px;"></div>
<div class="r" style="left:1819px;top:770px;width:6px;height:2px;background:#7cc4f8;border-radius:1px;"></div>
<svg class="r" style="left:1879px;top:744px;" width="14" height="17" viewBox="0 0 14 17" fill="none"><g stroke="#fff" stroke-width="1" fill="none"><path d="M3.5 1 V9 M3.5 13 V16"/><circle cx="3.5" cy="11" r="2"/><path d="M10.5 1 V3 M10.5 7 V16"/><circle cx="10.5" cy="5" r="2"/></g></svg>
<div class="r" style="left:1681px;top:772px;width:89px;height:24px;background:#383838;border-radius:5px;"></div>
<div class="r" style="left:1745px;top:772px;width:1px;height:24px;background:#2c2c2c;"></div>
<svg class="r" style="left:1687px;top:778px;" width="11" height="12" viewBox="0 0 11 12" fill="none"><g stroke="#bdbdbd" stroke-width="1" fill="none"><path d="M1 1.5 Q5.5 3.5 10 1.5 M1 10.5 Q5.5 8.5 10 10.5 M3 6 H8"/></g></svg>
<div class="t" style="left:1704.80px;top:778.69px;font-size:11px;line-height:11px;color:#ffffff;font-weight:700;letter-spacing:0.2px;">10</div>
<svg class="r" style="left:1753px;top:782px;" width="8" height="5" viewBox="0 0 8 5" fill="none"><path d="M1.2 1 L4 3.8 L6.8 1" stroke="#fff" stroke-width="1" fill="none"/></svg>
<div class="r" style="left:1681px;top:804px;width:89px;height:24px;background:#383838;border-radius:5px;"></div>
<svg class="r" style="left:1687px;top:810px;" width="12" height="12" viewBox="0 0 12 12" fill="none"><g stroke="#d6d6d6" stroke-width="0.9" fill="none"><path d="M1.5 0.5 V11.5 M10.5 0.5 V11.5"/><rect x="4.5" y="4.5" width="3" height="3"/></g></svg>
<div class="t" style="left:1705.00px;top:811.19px;font-size:11px;line-height:11px;color:#ffffff;font-weight:400;letter-spacing:0px;-webkit-text-stroke:0.25px currentColor;">0</div>
<div class="r" style="left:1778px;top:804px;width:88px;height:24px;background:#383838;border-radius:5px;"></div>
<svg class="r" style="left:1784px;top:810px;" width="12" height="12" viewBox="0 0 12 12" fill="none"><g stroke="#d6d6d6" stroke-width="0.9" fill="none"><path d="M0.5 1.5 H11.5 M0.5 10.5 H11.5"/><rect x="4.5" y="4.5" width="3" height="3"/></g></svg>
<div class="t" style="left:1801.00px;top:811.19px;font-size:11px;line-height:11px;color:#ffffff;font-weight:400;letter-spacing:0px;-webkit-text-stroke:0.25px currentColor;">0</div>
<svg class="r" style="left:1880px;top:809px;" width="13" height="13" viewBox="0 0 13 13" fill="none"><g stroke="#fff" stroke-width="1" fill="none"><path d="M3.5 1.5 A2 2 0 0 0 1.5 3.5 V9.5 A2 2 0 0 0 3.5 11.5 M9.5 1.5 A2 2 0 0 1 11.5 3.5 V9.5 A2 2 0 0 1 9.5 11.5 M4.8 1.5 H8.2 M4.8 11.5 H8.2"/></g></svg>
<div class="r" style="left:1681px;top:840px;width:16px;height:16px;background:#333333;border:1px solid #444;border-radius:3px;"></div>
<div class="t" style="left:1704.70px;top:842.69px;font-size:11px;line-height:11px;color:#ffffff;font-weight:400;letter-spacing:0.3px;-webkit-text-stroke:0.25px currentColor;">Clip content</div>
<div class="r" style="left:1665px;top:876px;width:241px;height:1px;background:#3e3e3e;"></div>
<div class="t" style="left:1681.00px;top:892.49px;font-size:11px;line-height:11px;color:#ffffff;font-weight:700;letter-spacing:0.2px;">Appearance</div>
<svg class="r" style="left:1849px;top:891px;" width="16" height="12" viewBox="0 0 16 12" fill="none"><g stroke="#fff" stroke-width="1" fill="none"><path d="M1.2 6 Q8 -3.5 14.8 6 Q8 15.5 1.2 6 Z"/><circle cx="8" cy="6" r="1.7"/></g></svg>
<svg class="r" style="left:1880px;top:889px;" width="12" height="15" viewBox="0 0 12 15" fill="none"><path d="M6 1.5 Q10 6.5 10 9.5 A4 4 0 0 1 2 9.5 Q2 6.5 6 1.5 Z" stroke="#fff" stroke-width="1" fill="none"/></svg>
<div class="r" style="left:1681px;top:921px;width:89px;height:24px;background:#383838;border-radius:5px;"></div>
<svg class="r" style="left:1687px;top:927px;" width="12" height="12" viewBox="0 0 12 12" fill="none"><rect x="1" y="1" width="10" height="10" rx="1.5" stroke="#bdbdbd" stroke-width="1" fill="none"/><g fill="#bdbdbd"><rect x="7" y="4" width="1" height="1"/><rect x="8" y="6" width="1" height="1"/><rect x="6" y="8" width="1" height="1"/><rect x="8" y="8" width="1" height="1"/><rect x="4" y="8" width="1" height="1"/></g></svg>
<div class="t" style="left:1706.00px;top:927.69px;font-size:11px;line-height:11px;color:#ffffff;font-weight:700;letter-spacing:0px;">100%</div>
<div class="r" style="left:1778px;top:921px;width:88px;height:24px;background:#383838;border-radius:5px;"></div>
<svg class="r" style="left:1785px;top:927px;" width="10" height="10" viewBox="0 0 10 10" fill="none"><path d="M1 9.5 V4 A3 3 0 0 1 4 1 H9.5" stroke="#bdbdbd" stroke-width="1" fill="none"/></svg>
<div class="t" style="left:1801.00px;top:928.19px;font-size:11px;line-height:11px;color:#ffffff;font-weight:400;letter-spacing:0px;-webkit-text-stroke:0.25px currentColor;">0</div>
<svg class="r" style="left:1880px;top:927px;" width="13" height="13" viewBox="0 0 13 13" fill="none"><g stroke="#fff" stroke-width="1" fill="none"><path d="M1 4.5 V1 H4.5 M8.5 1 H12 V4.5 M12 8.5 V12 H8.5 M4.5 12 H1 V8.5"/></g></svg>
<div class="r" style="left:1665px;top:962px;width:241px;height:1px;background:#3e3e3e;"></div>
<div class="r" style="left:1665px;top:963px;width:241px;height:19px;overflow:hidden;border-radius:0 0 12px 12px;">
<div class="t" style="left:16px;top:13.69px;font-size:11px;line-height:11px;color:#fff;font-weight:700;letter-spacing:0.2px;">Fill</div>
<svg class="r" style="left:214px;top:11.2px;" width="13" height="13" viewBox="0 0 13 13"><path d="M6.5 1.5 V11.5 M1.5 6.5 H11.5" stroke="#fff" stroke-width="1"/></svg>
</div>
<div class="r" style="left:1862px;top:938px;width:32px;height:32px;background:#1f1f1f;border-radius:50%;"></div>
<div class="t" style="left:1678.00px;width:400px;text-align:center;top:946.61px;font-size:17px;line-height:17px;color:#e0e0e0;font-weight:400;letter-spacing:0px;">?</div>
<div class="r" style="left:1909px;top:160px;width:7px;height:153px;background:transparent;border:1px solid #474747;border-radius:4px;"></div>
<div class="r" style="left:749px;top:934px;width:421px;height:48px;background:#2c2c2c;border-radius:13px;box-shadow:0 0 3px rgba(0,0,0,0.4);"></div>
<div class="r" style="left:757px;top:942px;width:32px;height:32px;background:#0d8ee6;border-radius:5px;"></div>
<svg class="r" style="left:763px;top:948px;" width="20" height="20" viewBox="0 0 20 20" fill="none"><path d="M2 2 L17.5 7.8 L10.3 10.3 L7.8 17.5 Z" stroke="#fff" stroke-width="1.15" stroke-linejoin="round" fill="none"/></svg>
<svg class="r" style="left:794px;top:956px;" width="8" height="5" viewBox="0 0 8 5" fill="none"><path d="M1.2 1 L4 3.8 L6.8 1" stroke="#fff" stroke-width="1" fill="none"/></svg>
<svg class="r" style="left:821px;top:949px;" width="18" height="18" viewBox="0 0 18 18" fill="none"><g stroke="#fff" stroke-width="1" fill="none"><path d="M4.5 0.5 V17.5 M13.5 0.5 V17.5 M0.5 4.5 H17.5 M0.5 13.5 H17.5"/></g></svg>
<svg class="r" style="left:851px;top:956px;" width="8" height="5" viewBox="0 0 8 5" fill="none"><path d="M1.2 1 L4 3.8 L6.8 1" stroke="#fff" stroke-width="1" fill="none"/></svg>
<svg class="r" style="left:878px;top:949px;" width="18" height="18" viewBox="0 0 18 18" fill="none"><rect x="1.5" y="1.5" width="15" height="15" rx="1.5" stroke="#fff" stroke-width="1.1" fill="none"/></svg>
<svg class="r" style="left:908px;top:956px;" width="8" height="5" viewBox="0 0 8 5" fill="none"><path d="M1.2 1 L4 3.8 L6.8 1" stroke="#fff" stroke-width="1" fill="none"/></svg>
<svg class="r" style="left:935px;top:948px;" width="20" height="20" viewBox="0 0 20 20" fill="none"><g stroke="#fff" stroke-width="1.05" fill="none" stroke-linejoin="round"><path d="M1.5 2 Q9.5 1.8 13.8 8.2 L17.8 13.8 L14 17.8 L8.2 13.8 Q1.8 9.5 1.5 2 Z"/><circle cx="8.8" cy="9.4" r="1.4"/><path d="M1.8 2.3 L7.8 8.4"/></g></svg>
<svg class="r" style="left:965px;top:956px;" width="8" height="5" viewBox="0 0 8 5" fill="none"><path d="M1.2 1 L4 3.8 L6.8 1" stroke="#fff" stroke-width="1" fill="none"/></svg>
<svg class="r" style="left:992px;top:949px;" width="17" height="17" viewBox="0 0 17 17" fill="none"><g stroke="#fff" stroke-width="1.1" fill="none"><path d="M1.5 3.5 V1.5 H15.5 V3.5 M8.5 1.5 V15.5 M6 15.5 H11"/></g></svg>
<svg class="r" style="left:1031px;top:948px;" width="20" height="20" viewBox="0 0 20 20" fill="none"><path d="M2.2 17.8 V10.2 A7.8 7.8 0 1 1 10 17.8 Z" stroke="#fff" stroke-width="1.1" fill="none" stroke-linejoin="round"/></svg>
<div class="r" style="left:1043px;top:949px;width:6px;height:6px;background:#f24822;border-radius:50%;"></div>
<svg class="r" style="left:1071px;top:948px;" width="20" height="20" viewBox="0 0 20 20" fill="none"><g stroke="#fff" stroke-width="1.1" fill="none"><path d="M5.5 1.5 L9 5 L5.5 8.5 L2 5 Z"/><circle cx="14.5" cy="5" r="3.2"/><rect x="2" y="12" width="6.5" height="6.5" rx="1"/><path d="M14.5 11.5 V18.5 M11 15 H18"/></g></svg>
<div class="r" style="left:1105px;top:935px;width:1px;height:46px;background:#3e3e3e;"></div>
<div class="r" style="left:1119px;top:946px;width:39px;height:23px;background:#383838;border-radius:6px;"></div>
<div class="r" style="left:1119px;top:946px;width:21px;height:23px;background:#2c2c2c;border-radius:6px;border:1px solid #3a3a3a;"></div>
<svg class="r" style="left:1121px;top:951px;" width="17" height="13" viewBox="0 0 17 13" fill="none"><g stroke="#fff" stroke-width="1.1" fill="none"><path d="M4.5 3 L1.5 6.5 L4.5 10 M12.5 3 L15.5 6.5 L12.5 10 M10 2 L7 11"/></g></svg>
<div class="r" style="left:858px;top:985px;width:295px;height:6px;background:transparent;border:1px solid #4a4a4a;border-radius:3px;"></div>
</body></html>
